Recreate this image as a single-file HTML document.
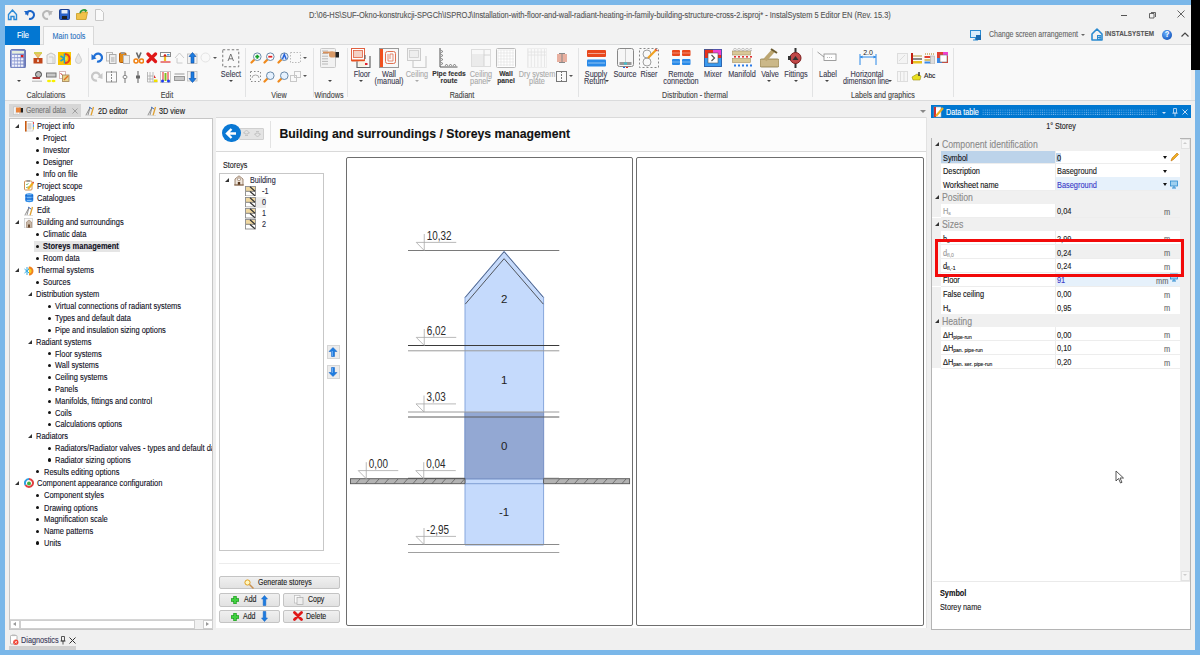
<!DOCTYPE html><html><head><meta charset="utf-8"><style>
*{margin:0;padding:0;box-sizing:border-box}
html,body{width:1200px;height:655px;overflow:hidden;background:#7ab7e9;font-family:"Liberation Sans",sans-serif}
.a{position:absolute}
.t{white-space:nowrap;-webkit-text-stroke:0.12px currentColor}

.sep{background:#e1e1e1}
sub{font-size:0.68em;vertical-align:-0.25em;line-height:0}
</style></head><body><div class="a" style="left:5px;top:5px;width:1190px;height:645px;background:#f0f0f0"></div>
<div class="a" style="left:1191px;top:0;width:9px;height:70px;background:#000"></div>
<div class="a " style="left:5px;top:5px;width:1186px;height:40px;background:#f2f2f2"></div>
<div class="a t" style="left:308.5px;top:9.00px;font-size:8.79px;line-height:12px;color:#555;font-weight:400;transform:scaleX(0.8475);transform-origin:0 50%;">D:\06-HS\SUF-Okno-konstrukcji-SPGCh\ISPROJ\Installation-with-floor-and-wall-radiant-heating-in-family-building-structure-cross-2.isproj* - InstalSystem 5 Editor EN (Rev. 15.3)</div>
<div class="a " style="left:1121px;top:14.5px;width:6px;height:1px;background:#555"></div>
<svg class="a" style="left:1149px;top:10.5px" width="8" height="8"><path d="M2 1.5H6.5V6M0.5 2.5H5V7H0.5Z" fill="none" stroke="#555" stroke-width="0.9"/></svg>
<svg class="a" style="left:1177px;top:10.3px" width="8" height="8"><path d="M0.5 0.5L7.5 7.5M7.5 0.5L0.5 7.5" stroke="#555" stroke-width="0.9"/></svg>
<div class="a " style="left:40px;top:44px;width:3px;height:1px;background:#dadbdc"></div>
<div class="a " style="left:93.5px;top:44px;width:1097.5px;height:1px;background:#dadbdc"></div>
<div class="a " style="left:5px;top:45px;width:1186px;height:55px;background:#f9f9f9"></div>
<div class="a " style="left:5px;top:26px;width:35px;height:18.5px;background:#0377d2"></div>
<div class="a t" style="left:-77.5px;width:200px;text-align:center;top:29.00px;font-size:8.85px;line-height:12px;color:#fff;font-weight:400;transform:scaleX(0.8475);transform-origin:50% 50%;">File</div>
<div class="a " style="left:43px;top:26.2px;width:50.5px;height:19px;background:#f9f9f9;border:1px solid #d8d8d8;border-bottom:none"></div>
<div class="a t" style="left:-31.5px;width:200px;text-align:center;top:29.50px;font-size:8.50px;line-height:12px;color:#2a73c0;font-weight:400;transform:scaleX(0.8475);transform-origin:50% 50%;">Main tools</div>
<div class="a t" style="left:989.4px;top:28.70px;font-size:8.26px;line-height:12px;color:#666;font-weight:400;transform:scaleX(0.8475);transform-origin:0 50%;">Change screen arrangement</div>
<div class="a" style="left:1081px;top:34px;width:0;height:0;border-left:2px solid transparent;border-right:2px solid transparent;border-top:2px solid #666"></div>
<div class="a t" style="left:1104.7px;top:27.80px;font-size:7.43px;line-height:12px;color:#555;font-weight:700;transform:scaleX(0.8475);transform-origin:0 50%;letter-spacing:0.1px">INSTALSYSTEM</div>
<div class="a" style="left:1162px;top:29.5px;width:10px;height:10px;border-radius:50%;background:radial-gradient(circle at 40% 35%,#6ab0ff,#1d5fc4 70%)"></div>
<div class="a t" style="left:1164.6px;top:28.70px;font-size:8.26px;line-height:12px;color:#fff;font-weight:700;transform:scaleX(0.8475);transform-origin:0 50%;">?</div>
<svg class="a" style="left:1181px;top:32px" width="8" height="5"><path d="M0.5 4.5L4 1L7.5 4.5" fill="none" stroke="#444" stroke-width="1.2"/></svg>
<div class="a " style="left:5px;top:100px;width:1190px;height:1px;background:#dadbdc"></div>
<div class="a " style="left:87.5px;top:48px;width:1px;height:49px;background:#e2e3e4"></div>
<div class="a " style="left:245.3px;top:48px;width:1px;height:49px;background:#e2e3e4"></div>
<div class="a " style="left:312.7px;top:48px;width:1px;height:49px;background:#e2e3e4"></div>
<div class="a " style="left:346.7px;top:48px;width:1px;height:49px;background:#e2e3e4"></div>
<div class="a " style="left:577.7px;top:48px;width:1px;height:49px;background:#e2e3e4"></div>
<div class="a " style="left:812.3px;top:48px;width:1px;height:49px;background:#e2e3e4"></div>
<div class="a " style="left:952.7px;top:48px;width:1px;height:49px;background:#e2e3e4"></div>
<div class="a t" style="left:-54.5px;width:200px;text-align:center;top:88.70px;font-size:8.44px;line-height:12px;color:#444;font-weight:400;transform:scaleX(0.8475);transform-origin:50% 50%;">Calculations</div>
<div class="a t" style="left:66.6px;width:200px;text-align:center;top:88.70px;font-size:8.44px;line-height:12px;color:#444;font-weight:400;transform:scaleX(0.8475);transform-origin:50% 50%;">Edit</div>
<div class="a t" style="left:178.7px;width:200px;text-align:center;top:88.70px;font-size:8.44px;line-height:12px;color:#444;font-weight:400;transform:scaleX(0.8475);transform-origin:50% 50%;">View</div>
<div class="a t" style="left:229.3px;width:200px;text-align:center;top:88.70px;font-size:8.44px;line-height:12px;color:#444;font-weight:400;transform:scaleX(0.8475);transform-origin:50% 50%;">Windows</div>
<div class="a t" style="left:362.3px;width:200px;text-align:center;top:88.70px;font-size:8.44px;line-height:12px;color:#444;font-weight:400;transform:scaleX(0.8475);transform-origin:50% 50%;">Radiant</div>
<div class="a t" style="left:595px;width:200px;text-align:center;top:88.70px;font-size:8.44px;line-height:12px;color:#444;font-weight:400;transform:scaleX(0.8475);transform-origin:50% 50%;">Distribution - thermal</div>
<div class="a t" style="left:782.7px;width:200px;text-align:center;top:88.70px;font-size:8.44px;line-height:12px;color:#444;font-weight:400;transform:scaleX(0.8475);transform-origin:50% 50%;">Labels and graphics</div>
<div class="a " style="left:9px;top:104.3px;width:72px;height:12.6px;background:#d6d6d6"></div>
<div class="a t" style="left:25.8px;top:104.50px;font-size:8.14px;line-height:12px;color:#777;font-weight:400;transform:scaleX(0.8475);transform-origin:0 50%;">General data</div>
<svg class="a" style="left:71.5px;top:108.3px" width="6" height="6"><path d="M0.5 0.5L5.5 5.5M5.5 0.5L0.5 5.5" stroke="#999" stroke-width="0.9"/></svg>
<div class="a t" style="left:97.8px;top:104.50px;font-size:8.61px;line-height:12px;color:#222;font-weight:400;transform:scaleX(0.8475);transform-origin:0 50%;">2D editor</div>
<div class="a t" style="left:159px;top:104.50px;font-size:8.61px;line-height:12px;color:#222;font-weight:400;transform:scaleX(0.8475);transform-origin:0 50%;">3D view</div>
<div class="a" style="left:920px;top:110px;width:0;height:0;border-left:3px solid transparent;border-right:3px solid transparent;border-top:3px solid #888"></div>
<div class="a " style="left:9px;top:117.5px;width:204px;height:512.5px;background:#fff;border:1px solid #c6c6c6"></div>
<div class="a " style="left:213px;top:117px;width:3px;height:513px;background:#eeeeee"></div>
<div class="a " style="left:10px;top:619px;width:202px;height:10px;background:#f0f0f0;border-top:1px solid #d6d6d6"></div>
<div class="a " style="left:10px;top:620px;width:10px;height:9px;background:#fff;border:1px solid #cfcfcf"></div>
<div class="a " style="left:20px;top:620px;width:175px;height:9px;background:#fff;border:1px solid #cfcfcf"></div>
<div class="a " style="left:202.5px;top:620px;width:10px;height:9px;background:#fff;border:1px solid #cfcfcf"></div>
<div class="a" style="left:13px;top:622px;width:0;height:0;border-top:2.5px solid transparent;border-bottom:2.5px solid transparent;border-right:3px solid #999"></div>
<div class="a" style="left:206px;top:622px;width:0;height:0;border-top:2.5px solid transparent;border-bottom:2.5px solid transparent;border-left:3px solid #999"></div>
<div class="a" style="left:10px;top:118px;width:202px;height:500px;overflow:hidden">
<div class="a" style="left:5.199999999999999px;top:6.00px;width:0;height:0;border-left:4px solid transparent;border-bottom:4px solid #333"></div>
<div class="a i_proj" style="left:3px;top:3.00px;width:9px;height:10px"></div>
<div class="a t" style="left:27.4px;top:2.00px;font-size:8.85px;line-height:12px;color:#10101e;font-weight:400;transform:scaleX(0.8475);transform-origin:0 50%;">Project info</div>
<div class="a " style="left:26.199999999999996px;top:19.000000000000007px;width:3.3px;height:3.3px;background:#111;border-radius:50%"></div>
<div class="a t" style="left:33.3px;top:14.40px;font-size:8.85px;line-height:12px;color:#10101e;font-weight:400;transform:scaleX(0.8475);transform-origin:0 50%;">Project</div>
<div class="a " style="left:26.199999999999996px;top:30.900000000000013px;width:3.3px;height:3.3px;background:#111;border-radius:50%"></div>
<div class="a t" style="left:33.3px;top:26.30px;font-size:8.85px;line-height:12px;color:#10101e;font-weight:400;transform:scaleX(0.8475);transform-origin:0 50%;">Investor</div>
<div class="a " style="left:26.199999999999996px;top:42.50000000000001px;width:3.3px;height:3.3px;background:#111;border-radius:50%"></div>
<div class="a t" style="left:33.3px;top:37.90px;font-size:8.85px;line-height:12px;color:#10101e;font-weight:400;transform:scaleX(0.8475);transform-origin:0 50%;">Designer</div>
<div class="a " style="left:26.199999999999996px;top:54.541666666666664px;width:3.3px;height:3.3px;background:#111;border-radius:50%"></div>
<div class="a t" style="left:33.3px;top:49.94px;font-size:8.85px;line-height:12px;color:#10101e;font-weight:400;transform:scaleX(0.8475);transform-origin:0 50%;">Info on file</div>
<div class="a i_scope" style="left:3px;top:62.98px;width:9px;height:10px"></div>
<div class="a t" style="left:27.4px;top:61.98px;font-size:8.85px;line-height:12px;color:#10101e;font-weight:400;transform:scaleX(0.8475);transform-origin:0 50%;">Project scope</div>
<div class="a i_cat" style="left:3px;top:75.03px;width:9px;height:10px"></div>
<div class="a t" style="left:27.4px;top:74.03px;font-size:8.85px;line-height:12px;color:#10101e;font-weight:400;transform:scaleX(0.8475);transform-origin:0 50%;">Catalogues</div>
<div class="a i_edit" style="left:3px;top:87.07px;width:9px;height:10px"></div>
<div class="a t" style="left:27.4px;top:86.07px;font-size:8.85px;line-height:12px;color:#10101e;font-weight:400;transform:scaleX(0.8475);transform-origin:0 50%;">Edit</div>
<div class="a" style="left:5.199999999999999px;top:102.11px;width:0;height:0;border-left:4px solid transparent;border-bottom:4px solid #333"></div>
<div class="a i_bld" style="left:3px;top:99.11px;width:9px;height:10px"></div>
<div class="a t" style="left:27.4px;top:98.11px;font-size:8.85px;line-height:12px;color:#10101e;font-weight:400;transform:scaleX(0.8475);transform-origin:0 50%;">Building and surroundings</div>
<div class="a " style="left:26.199999999999996px;top:114.74999999999997px;width:3.3px;height:3.3px;background:#111;border-radius:50%"></div>
<div class="a t" style="left:33.3px;top:110.15px;font-size:8.85px;line-height:12px;color:#10101e;font-weight:400;transform:scaleX(0.8475);transform-origin:0 50%;">Climatic data</div>
<div class="a " style="left:23.700000000000003px;top:122.69166666666666px;width:86px;height:11px;background:#e5e5e5"></div>
<div class="a " style="left:26.199999999999996px;top:126.79166666666666px;width:3.3px;height:3.3px;background:#111;border-radius:50%"></div>
<div class="a t" style="left:33.3px;top:122.19px;font-size:8.85px;line-height:12px;color:#10101e;font-weight:400;transform:scaleX(0.8475);transform-origin:0 50%;"><b>Storeys management</b></div>
<div class="a " style="left:26.199999999999996px;top:138.83333333333334px;width:3.3px;height:3.3px;background:#111;border-radius:50%"></div>
<div class="a t" style="left:33.3px;top:134.23px;font-size:8.85px;line-height:12px;color:#10101e;font-weight:400;transform:scaleX(0.8475);transform-origin:0 50%;">Room data</div>
<div class="a" style="left:5.199999999999999px;top:150.27px;width:0;height:0;border-left:4px solid transparent;border-bottom:4px solid #333"></div>
<div class="a i_therm" style="left:3px;top:147.27px;width:9px;height:10px"></div>
<div class="a t" style="left:27.4px;top:146.27px;font-size:8.85px;line-height:12px;color:#10101e;font-weight:400;transform:scaleX(0.8475);transform-origin:0 50%;">Thermal systems</div>
<div class="a " style="left:26.199999999999996px;top:162.91666666666666px;width:3.3px;height:3.3px;background:#111;border-radius:50%"></div>
<div class="a t" style="left:33.3px;top:158.32px;font-size:8.85px;line-height:12px;color:#10101e;font-weight:400;transform:scaleX(0.8475);transform-origin:0 50%;">Sources</div>
<div class="a" style="left:17.5px;top:174.36px;width:0;height:0;border-left:4px solid transparent;border-bottom:4px solid #333"></div>
<div class="a t" style="left:25.6px;top:170.36px;font-size:8.85px;line-height:12px;color:#10101e;font-weight:400;transform:scaleX(0.8475);transform-origin:0 50%;">Distribution system</div>
<div class="a " style="left:38.199999999999996px;top:186.99999999999997px;width:3.3px;height:3.3px;background:#111;border-radius:50%"></div>
<div class="a t" style="left:45px;top:182.40px;font-size:8.85px;line-height:12px;color:#10101e;font-weight:400;transform:scaleX(0.8475);transform-origin:0 50%;">Virtual connections of radiant systems</div>
<div class="a " style="left:38.199999999999996px;top:198.99999999999997px;width:3.3px;height:3.3px;background:#111;border-radius:50%"></div>
<div class="a t" style="left:45px;top:194.40px;font-size:8.85px;line-height:12px;color:#10101e;font-weight:400;transform:scaleX(0.8475);transform-origin:0 50%;">Types and default data</div>
<div class="a " style="left:38.199999999999996px;top:210.9px;width:3.3px;height:3.3px;background:#111;border-radius:50%"></div>
<div class="a t" style="left:45px;top:206.30px;font-size:8.85px;line-height:12px;color:#10101e;font-weight:400;transform:scaleX(0.8475);transform-origin:0 50%;">Pipe and insulation sizing options</div>
<div class="a" style="left:17.5px;top:221.70px;width:0;height:0;border-left:4px solid transparent;border-bottom:4px solid #333"></div>
<div class="a t" style="left:25.6px;top:217.70px;font-size:8.85px;line-height:12px;color:#10101e;font-weight:400;transform:scaleX(0.8475);transform-origin:0 50%;">Radiant systems</div>
<div class="a " style="left:38.199999999999996px;top:234.17499999999998px;width:3.3px;height:3.3px;background:#111;border-radius:50%"></div>
<div class="a t" style="left:45px;top:229.57px;font-size:8.85px;line-height:12px;color:#10101e;font-weight:400;transform:scaleX(0.8475);transform-origin:0 50%;">Floor systems</div>
<div class="a " style="left:38.199999999999996px;top:246.04999999999998px;width:3.3px;height:3.3px;background:#111;border-radius:50%"></div>
<div class="a t" style="left:45px;top:241.45px;font-size:8.85px;line-height:12px;color:#10101e;font-weight:400;transform:scaleX(0.8475);transform-origin:0 50%;">Wall systems</div>
<div class="a " style="left:38.199999999999996px;top:257.925px;width:3.3px;height:3.3px;background:#111;border-radius:50%"></div>
<div class="a t" style="left:45px;top:253.32px;font-size:8.85px;line-height:12px;color:#10101e;font-weight:400;transform:scaleX(0.8475);transform-origin:0 50%;">Ceiling systems</div>
<div class="a " style="left:38.199999999999996px;top:269.8px;width:3.3px;height:3.3px;background:#111;border-radius:50%"></div>
<div class="a t" style="left:45px;top:265.20px;font-size:8.85px;line-height:12px;color:#10101e;font-weight:400;transform:scaleX(0.8475);transform-origin:0 50%;">Panels</div>
<div class="a " style="left:38.199999999999996px;top:281.5px;width:3.3px;height:3.3px;background:#111;border-radius:50%"></div>
<div class="a t" style="left:45px;top:276.90px;font-size:8.85px;line-height:12px;color:#10101e;font-weight:400;transform:scaleX(0.8475);transform-origin:0 50%;">Manifolds, fittings and control</div>
<div class="a " style="left:38.199999999999996px;top:293.1px;width:3.3px;height:3.3px;background:#111;border-radius:50%"></div>
<div class="a t" style="left:45px;top:288.50px;font-size:8.85px;line-height:12px;color:#10101e;font-weight:400;transform:scaleX(0.8475);transform-origin:0 50%;">Coils</div>
<div class="a " style="left:38.199999999999996px;top:305.0px;width:3.3px;height:3.3px;background:#111;border-radius:50%"></div>
<div class="a t" style="left:45px;top:300.40px;font-size:8.85px;line-height:12px;color:#10101e;font-weight:400;transform:scaleX(0.8475);transform-origin:0 50%;">Calculations options</div>
<div class="a" style="left:17.5px;top:315.60px;width:0;height:0;border-left:4px solid transparent;border-bottom:4px solid #333"></div>
<div class="a t" style="left:25.6px;top:311.60px;font-size:8.85px;line-height:12px;color:#10101e;font-weight:400;transform:scaleX(0.8475);transform-origin:0 50%;">Radiators</div>
<div class="a " style="left:38.199999999999996px;top:328.70000000000005px;width:3.3px;height:3.3px;background:#111;border-radius:50%"></div>
<div class="a t" style="left:45px;top:324.10px;font-size:8.85px;line-height:12px;color:#10101e;font-weight:400;transform:scaleX(0.8475);transform-origin:0 50%;">Radiators/Radiator valves - types and default data</div>
<div class="a " style="left:38.199999999999996px;top:340.3px;width:3.3px;height:3.3px;background:#111;border-radius:50%"></div>
<div class="a t" style="left:45px;top:335.70px;font-size:8.85px;line-height:12px;color:#10101e;font-weight:400;transform:scaleX(0.8475);transform-origin:0 50%;">Radiator sizing options</div>
<div class="a " style="left:25.9px;top:352.20000000000005px;width:3.3px;height:3.3px;background:#111;border-radius:50%"></div>
<div class="a t" style="left:33.7px;top:347.60px;font-size:8.85px;line-height:12px;color:#10101e;font-weight:400;transform:scaleX(0.8475);transform-origin:0 50%;">Results editing options</div>
<div class="a" style="left:5.199999999999999px;top:363.00px;width:0;height:0;border-left:4px solid transparent;border-bottom:4px solid #333"></div>
<div class="a i_comp" style="left:2px;top:360.00px;width:9px;height:10px"></div>
<div class="a t" style="left:27.200000000000003px;top:359.00px;font-size:8.85px;line-height:12px;color:#10101e;font-weight:400;transform:scaleX(0.8475);transform-origin:0 50%;">Component appearance configuration</div>
<div class="a " style="left:25.9px;top:376.0px;width:3.3px;height:3.3px;background:#111;border-radius:50%"></div>
<div class="a t" style="left:33.7px;top:371.40px;font-size:8.85px;line-height:12px;color:#10101e;font-weight:400;transform:scaleX(0.8475);transform-origin:0 50%;">Component styles</div>
<div class="a " style="left:25.9px;top:388.20000000000005px;width:3.3px;height:3.3px;background:#111;border-radius:50%"></div>
<div class="a t" style="left:33.7px;top:383.60px;font-size:8.85px;line-height:12px;color:#10101e;font-weight:400;transform:scaleX(0.8475);transform-origin:0 50%;">Drawing options</div>
<div class="a " style="left:25.9px;top:399.9px;width:3.3px;height:3.3px;background:#111;border-radius:50%"></div>
<div class="a t" style="left:33.7px;top:395.30px;font-size:8.85px;line-height:12px;color:#10101e;font-weight:400;transform:scaleX(0.8475);transform-origin:0 50%;">Magnification scale</div>
<div class="a " style="left:25.9px;top:411.80000000000007px;width:3.3px;height:3.3px;background:#111;border-radius:50%"></div>
<div class="a t" style="left:33.7px;top:407.20px;font-size:8.85px;line-height:12px;color:#10101e;font-weight:400;transform:scaleX(0.8475);transform-origin:0 50%;">Name patterns</div>
<div class="a " style="left:25.9px;top:423.4px;width:3.3px;height:3.3px;background:#111;border-radius:50%"></div>
<div class="a t" style="left:33.7px;top:418.80px;font-size:8.85px;line-height:12px;color:#10101e;font-weight:400;transform:scaleX(0.8475);transform-origin:0 50%;">Units</div>
</div>
<div class="a " style="left:216px;top:118px;width:711px;height:510px;background:#fff"></div>
<div class="a " style="left:216px;top:118px;width:711px;height:33px;background:#fcfcfc"></div>
<div class="a " style="left:216px;top:151px;width:711px;height:1px;background:#d9d9d9"></div>
<div class="a " style="left:216px;top:117.3px;width:711px;height:1px;background:#dadada"></div>
<div class="a " style="left:926.3px;top:117.3px;width:1px;height:511px;background:#e2e2e2"></div>
<div class="a " style="left:270px;top:121px;width:1px;height:27px;background:#e3e3e3"></div>
<div class="a t" style="left:279.5px;top:128.00px;font-size:12.25px;line-height:12px;color:#111;font-weight:700;transform:scaleX(1.0000);transform-origin:0 50%;">Building and surroundings / Storeys management</div>
<div class="a " style="left:239px;top:127.5px;width:24.5px;height:12px;background:#e4e4e4;border:1px solid #d0d0d0;border-radius:1px"></div>
<svg class="a" style="left:242.5px;top:129px" width="20" height="9"><path d="M3.5 1L6.5 4H5V5H2V4H0.5ZM2 6.5H5" fill="none" stroke="#b8b8b8" stroke-width="0.7"/><path d="M14.5 8L17.5 5H16V4H13V5H11.5ZM13 2.5H16" fill="none" stroke="#b8b8b8" stroke-width="0.7"/></svg>
<div class="a" style="left:222.3px;top:124px;width:18.4px;height:18.4px;border-radius:50%;background:#0a78d4"></div>
<svg class="a" style="left:224px;top:126px" width="15" height="15"><path d="M3 7.5h9M7.5 3L3 7.5L7.5 12" fill="none" stroke="#fff" stroke-width="2.4"/></svg>
<div class="a t" style="left:222.7px;top:159.30px;font-size:8.50px;line-height:12px;color:#222;font-weight:400;transform:scaleX(0.8475);transform-origin:0 50%;">Storeys</div>
<div class="a " style="left:219.3px;top:173.3px;width:104.5px;height:377.5px;background:#fff;border:1px solid #c7c7c7"></div>
<div class="a " style="left:219px;top:563px;width:121px;height:1px;background:#ececec"></div>
<div class="a " style="left:219.3px;top:576.4px;width:120.7px;height:13.1px;background:linear-gradient(#f0f0f0,#e2e2e2);border:1px solid #c4c4c4;border-radius:2px"></div>
<div class="a t" style="left:257.8px;top:576.95px;font-size:8.26px;line-height:12px;color:#222;font-weight:400;transform:scaleX(0.8475);transform-origin:0 50%;">Generate storeys</div>
<div class="a " style="left:219.3px;top:593.3px;width:60.5px;height:13.3px;background:linear-gradient(#f0f0f0,#e2e2e2);border:1px solid #c4c4c4;border-radius:2px"></div>
<div class="a t" style="left:243.5px;top:593.95px;font-size:8.26px;line-height:12px;color:#222;font-weight:400;transform:scaleX(0.8475);transform-origin:0 50%;">Add</div>
<div class="a " style="left:282.5px;top:593.3px;width:57.5px;height:13.3px;background:linear-gradient(#f0f0f0,#e2e2e2);border:1px solid #c4c4c4;border-radius:2px"></div>
<div class="a t" style="left:307.6px;top:593.95px;font-size:8.26px;line-height:12px;color:#222;font-weight:400;transform:scaleX(0.8475);transform-origin:0 50%;">Copy</div>
<div class="a " style="left:219.3px;top:610px;width:60.5px;height:13.1px;background:linear-gradient(#f0f0f0,#e2e2e2);border:1px solid #c4c4c4;border-radius:2px"></div>
<div class="a t" style="left:243px;top:610.55px;font-size:8.26px;line-height:12px;color:#222;font-weight:400;transform:scaleX(0.8475);transform-origin:0 50%;">Add</div>
<div class="a " style="left:282.5px;top:610px;width:57.5px;height:13.1px;background:linear-gradient(#f0f0f0,#e2e2e2);border:1px solid #c4c4c4;border-radius:2px"></div>
<div class="a t" style="left:305.5px;top:610.55px;font-size:8.26px;line-height:12px;color:#222;font-weight:400;transform:scaleX(0.8475);transform-origin:0 50%;">Delete</div>
<div class="a " style="left:346.2px;top:157.4px;width:287.2px;height:469px;border:1px solid #6e6e6e;border-radius:2px"></div>
<div class="a " style="left:636.3px;top:157.4px;width:287.6px;height:469px;border:1px solid #6e6e6e;border-radius:2px"></div>
<div class="a " style="left:931.4px;top:105px;width:259.6px;height:13.3px;background:#0077d0"></div>
<div class="a t" style="left:945.9px;top:105.50px;font-size:8.50px;line-height:12px;color:#fff;font-weight:400;transform:scaleX(0.8475);transform-origin:0 50%;">Data table</div>
<div class="a " style="left:931.4px;top:118px;width:259.6px;height:512px;background:#f0f0f0"></div>
<div class="a t" style="left:961px;width:200px;text-align:center;top:119.50px;font-size:8.50px;line-height:12px;color:#222;font-weight:400;transform:scaleX(0.8475);transform-origin:50% 50%;">1° Storey</div>
<div class="a " style="left:931.2px;top:137.5px;width:259.8px;height:492px;background:#fff;border:1px solid #b4b4b4"></div>
<div class="a " style="left:932.2px;top:138.5px;width:247.8px;height:442px;background:#fff"></div>
<div class="a " style="left:1180px;top:138.5px;width:10px;height:442px;background:#f0f0f0"></div>
<div class="a " style="left:932.5px;top:580.5px;width:257.5px;height:1px;background:#eaeaea"></div>
<div class="a t" style="left:939.5px;top:587.00px;font-size:8.61px;line-height:12px;color:#111;font-weight:700;transform:scaleX(0.8475);transform-origin:0 50%;">Symbol</div>
<div class="a t" style="left:939.5px;top:600.70px;font-size:8.61px;line-height:12px;color:#222;font-weight:400;transform:scaleX(0.8475);transform-origin:0 50%;">Storey name</div>
<div class="a t" style="left:21px;top:633.90px;font-size:8.61px;line-height:12px;color:#3a3a5a;font-weight:400;transform:scaleX(0.8475);transform-origin:0 50%;">Diagnostics</div>
<div class="a " style="left:9px;top:646px;width:67px;height:4px;background:#d0d0d0"></div>
<svg class="a" style="left:12.6px;top:105.5px" width="10" height="9" viewBox="0 0 10 9"><rect x="0.5" y="1" width="6" height="7.5" fill="#fff" stroke="#bbb" stroke-width="0.6"/><path d="M1.5 3H5M1.5 5H5M1.5 7H5" stroke="#aaa" stroke-width="0.5"/><path d="M3 1.5H8V6.5H3Z" fill="#e8843c"/><rect x="7.8" y="2" width="2.2" height="4.5" fill="#222"/></svg>
<svg class="a" style="left:85px;top:105.5px" width="10" height="10" viewBox="0 0 10 10"><path d="M1 9L5 1.5M5 1.5L3 9" stroke="#777" stroke-width="0.8" fill="none"/><path d="M4 1L7 3" stroke="#3a6ac0" stroke-width="1"/><path d="M6 9.5L8.5 1" stroke="#e0a030" stroke-width="1.3"/><path d="M0 9.5H9" stroke="#ccc" stroke-width="0.6"/></svg>
<svg class="a" style="left:146.7px;top:105.5px" width="10" height="10" viewBox="0 0 10 10"><path d="M1 9L5 1.5M5 1.5L3 9" stroke="#777" stroke-width="0.8" fill="none"/><path d="M4 1L7 3" stroke="#3a6ac0" stroke-width="1"/><path d="M6 9.5L8.5 1" stroke="#e0a030" stroke-width="1.3"/><path d="M0 9.5H9" stroke="#ccc" stroke-width="0.6"/></svg>
<svg class="a" style="left:25px;top:121px" width="9" height="10.5" viewBox="0 0 9 10.5"><rect x="0.5" y="0.5" width="7.5" height="9.5" fill="#fff" stroke="#bbb" stroke-width="0.6"/><rect x="0" y="0" width="1.6" height="10.5" fill="#c85a10"/><rect x="2.5" y="2" width="4" height="6.5" fill="#d6d6d6"/><rect x="8" y="1" width="1" height="2.5" fill="#f05050"/><rect x="8" y="3.5" width="1" height="2.5" fill="#50a0f0"/><rect x="8" y="6" width="1" height="2.5" fill="#e0c040"/></svg>
<svg class="a" style="left:24px;top:180.4px" width="10" height="10.5" viewBox="0 0 10 10.5"><rect x="0.5" y="1" width="7.5" height="9" rx="1" fill="#fff" stroke="#d09050" stroke-width="1"/><rect x="2.5" y="0" width="3.5" height="1.8" fill="#999"/><path d="M2 4L3 5L4.5 3M2 7L3 8L4.5 6" stroke="#40a040" stroke-width="0.6" fill="none"/><path d="M4 9L9 3" stroke="#f0b020" stroke-width="2"/><circle cx="9.2" cy="2.6" r="0.9" fill="#e05040"/></svg>
<svg class="a" style="left:25px;top:193.3px" width="8.5" height="10" viewBox="0 0 8.5 10"><ellipse cx="4.25" cy="1.8" rx="4" ry="1.6" fill="#2a8ae8"/><rect x="0.25" y="2" width="8" height="2.4" fill="#1a6ad0"/><ellipse cx="4.25" cy="4.6" rx="4" ry="1.4" fill="#3a9af0"/><rect x="0.25" y="4.8" width="8" height="2.4" fill="#1a6ad0"/><ellipse cx="4.25" cy="7.6" rx="4" ry="1.6" fill="#2a8ae8"/><path d="M2 1.8H6.5M2 4.8H6.5M2 7.6H6.5" stroke="#cfe6ff" stroke-width="0.6"/></svg>
<svg class="a" style="left:24px;top:205.5px" width="10" height="10" viewBox="0 0 10 10"><path d="M1 9L5 1.5M5 1.5L3 9" stroke="#777" stroke-width="0.8" fill="none"/><path d="M4 1L7 3" stroke="#3a6ac0" stroke-width="1"/><path d="M6 9.5L8.5 1" stroke="#e0a030" stroke-width="1.3"/><path d="M0 9.5H9" stroke="#ccc" stroke-width="0.6"/></svg>
<svg class="a" style="left:24px;top:217.5px" width="10" height="10.5" viewBox="0 0 10 10.5"><rect x="0.5" y="0.5" width="8" height="9.5" fill="#fafafa" stroke="#c8c8c8" stroke-width="0.7"/><path d="M2.5 4L5 2L7.5 4V9.5H2.5Z" fill="#c8b8a8" stroke="#8a6a50" stroke-width="0.5"/><rect x="4" y="6.5" width="2" height="3" fill="#6a4a30"/></svg>
<svg class="a" style="left:24.4px;top:265.5px" width="9.5" height="10" viewBox="0 0 9.5 10"><path d="M5 5A4.5 4.5 0 0 1 5 0.5A4.5 4.5 0 0 1 5 9.5Z" fill="#f08020"/><path d="M5 2.5A2.5 2.5 0 0 1 5 7.5" fill="#f8d020"/><path d="M3 1V9M0.5 3L5 7M0.5 7L5 3" stroke="#30a8e0" stroke-width="1"/></svg>
<svg class="a" style="left:23.8px;top:478px" width="10" height="10.5" viewBox="0 0 10 10.5"><path d="M5 1A4 4 0 1 1 1.5 7" fill="none" stroke="#e04040" stroke-width="2"/><path d="M1.5 7A4 4 0 0 1 5 1" fill="none" stroke="#30a0e0" stroke-width="2"/><circle cx="5" cy="5.5" r="2" fill="#40b040"/></svg>
<div class="a" style="left:225.3px;top:178px;width:0;height:0;border-left:4px solid transparent;border-bottom:4px solid #333"></div>
<svg class="a" style="left:234px;top:175px" width="10" height="10.5" viewBox="0 0 10 10.5"><path d="M1 4L5 0.8L9 4V10H1Z" fill="#efe6dc" stroke="#7a5a40" stroke-width="0.7"/><circle cx="5" cy="4.3" r="1.5" fill="#fff" stroke="#7a5a40" stroke-width="0.6"/><rect x="3.8" y="7" width="2.4" height="3" fill="#5a3a20"/><path d="M0 10H10" stroke="#8a6a50"/></svg>
<div class="a t" style="left:250.3px;top:173.70px;font-size:8.50px;line-height:12px;color:#2a2a40;font-weight:400;transform:scaleX(0.8475);transform-origin:0 50%;">Building</div>
<div class="a " style="left:245px;top:196.5px;width:21px;height:11px;background:#ececec"></div>
<svg class="a" style="left:245px;top:185.6px" width="11" height="10.5" viewBox="0 0 11 10.5"><rect x="0.5" y="0.5" width="10" height="9.5" fill="#fff" stroke="#8a8a8a" stroke-width="0.9"/><rect x="1" y="1" width="9" height="4.3" fill="#f0d8a0"/><path d="M1 5.3H10" stroke="#777" stroke-width="0.9"/><path d="M5 0.8L10 5.2M5 5.5L10 9.8" stroke="#333" stroke-width="1.2"/></svg>
<div class="a t" style="left:262px;top:184.60px;font-size:8.50px;line-height:12px;color:#2a2a40;font-weight:400;transform:scaleX(0.8475);transform-origin:0 50%;">-1</div>
<svg class="a" style="left:245px;top:196.79999999999998px" width="11" height="10.5" viewBox="0 0 11 10.5"><rect x="0.5" y="0.5" width="10" height="9.5" fill="#fff" stroke="#8a8a8a" stroke-width="0.9"/><rect x="1" y="1" width="9" height="4.3" fill="#f0d8a0"/><path d="M1 5.3H10" stroke="#777" stroke-width="0.9"/><path d="M5 0.8L10 5.2M5 5.5L10 9.8" stroke="#333" stroke-width="1.2"/></svg>
<div class="a t" style="left:262px;top:195.80px;font-size:8.50px;line-height:12px;color:#2a2a40;font-weight:400;transform:scaleX(0.8475);transform-origin:0 50%;">0</div>
<svg class="a" style="left:245px;top:208.0px" width="11" height="10.5" viewBox="0 0 11 10.5"><rect x="0.5" y="0.5" width="10" height="9.5" fill="#fff" stroke="#8a8a8a" stroke-width="0.9"/><rect x="1" y="1" width="9" height="4.3" fill="#f0d8a0"/><path d="M1 5.3H10" stroke="#777" stroke-width="0.9"/><path d="M5 0.8L10 5.2M5 5.5L10 9.8" stroke="#333" stroke-width="1.2"/></svg>
<div class="a t" style="left:262px;top:207.00px;font-size:8.50px;line-height:12px;color:#2a2a40;font-weight:400;transform:scaleX(0.8475);transform-origin:0 50%;">1</div>
<svg class="a" style="left:245px;top:219.2px" width="11" height="10.5" viewBox="0 0 11 10.5"><rect x="0.5" y="0.5" width="10" height="9.5" fill="#fff" stroke="#8a8a8a" stroke-width="0.9"/><rect x="1" y="1" width="9" height="4.3" fill="#f0d8a0"/><path d="M1 5.3H10" stroke="#777" stroke-width="0.9"/><path d="M5 0.8L10 5.2M5 5.5L10 9.8" stroke="#333" stroke-width="1.2"/></svg>
<div class="a t" style="left:262px;top:218.20px;font-size:8.50px;line-height:12px;color:#2a2a40;font-weight:400;transform:scaleX(0.8475);transform-origin:0 50%;">2</div>
<div class="a " style="left:326.8px;top:345.3px;width:13px;height:13.3px;background:#ececec;border:1px solid #d6d6d6"></div>
<svg class="a" style="left:328.3px;top:346.8px" width="10" height="10" viewBox="0 0 10 10"><path d="M5 0.5L9 4.5H6.5V9.5H3.5V4.5H1Z" fill="#1c7ce0" stroke="#0a5ac0" stroke-width="0.5"/><path d="M4.3 4V9" stroke="#8cc4ff" stroke-width="0.8"/></svg>
<div class="a " style="left:326.8px;top:365.4px;width:13px;height:13.3px;background:#ececec;border:1px solid #d6d6d6"></div>
<svg class="a" style="left:328.3px;top:367.2px" width="10" height="10" viewBox="0 0 10 10"><path d="M5 9.5L9 5.5H6.5V0.5H3.5V5.5H1Z" fill="#1c7ce0" stroke="#0a5ac0" stroke-width="0.5"/><path d="M4.3 1V6" stroke="#8cc4ff" stroke-width="0.8"/></svg>
<svg class="a" style="left:244px;top:578.5px" width="10" height="10" viewBox="0 0 10 10"><circle cx="3.5" cy="3.5" r="2.6" fill="#fff6c0" stroke="#e0a020" stroke-width="1"/><path d="M5.5 5.5L9.5 9.5" stroke="#c89050" stroke-width="1.5"/></svg>
<svg class="a" style="left:229.5px;top:595px" width="10" height="10" viewBox="0 0 10 10"><path d="M5 1V9M1 5H9" stroke="#1a9a1a" stroke-width="3.4"/><path d="M5 1.5V8.5M1.5 5H8.5" stroke="#40d040" stroke-width="2"/></svg>
<svg class="a" style="left:229.5px;top:611.7px" width="10" height="10" viewBox="0 0 10 10"><path d="M5 1V9M1 5H9" stroke="#1a9a1a" stroke-width="3.4"/><path d="M5 1.5V8.5M1.5 5H8.5" stroke="#40d040" stroke-width="2"/></svg>
<svg class="a" style="left:261px;top:594.5px" width="7" height="11" viewBox="0 0 7 11"><path d="M3.5 0.5L6.5 4H4.8V10.5H2.2V4H0.5Z" fill="#1c7ce0" stroke="#0a5ac0" stroke-width="0.5"/></svg>
<svg class="a" style="left:261px;top:611.2px" width="7" height="11" viewBox="0 0 7 11"><path d="M3.5 10.5L6.5 7H4.8V0.5H2.2V7H0.5Z" fill="#1c7ce0" stroke="#0a5ac0" stroke-width="0.5"/></svg>
<svg class="a" style="left:294px;top:595px" width="10" height="10" viewBox="0 0 10 10"><rect x="0.5" y="0.5" width="5.5" height="7.5" fill="#fafafa" stroke="#bbb" stroke-width="0.7"/><rect x="3" y="2.5" width="6" height="7" fill="#eee" stroke="#aaa" stroke-width="0.7"/></svg>
<svg class="a" style="left:292.5px;top:611px" width="10" height="10" viewBox="0 0 10 10"><path d="M1.5 1.5L8.5 8.5M8.5 1.5L1.5 8.5" stroke="#e01818" stroke-width="2.8" stroke-linecap="round"/></svg>
<svg class="a" style="left:10px;top:633.8px" width="9" height="11" viewBox="0 0 9 11"><rect x="0.5" y="1.5" width="6.5" height="8.5" rx="0.8" fill="#fff" stroke="#999" stroke-width="0.7"/><rect x="2" y="0.5" width="3.5" height="1.6" fill="#bbb"/><circle cx="5.8" cy="8.2" r="2.6" fill="#f04030"/><path d="M4.6 7L7 9.4M7 7L4.6 9.4" stroke="#fff" stroke-width="0.7"/></svg>
<svg class="a" style="left:59.5px;top:635.5px" width="6" height="9" viewBox="0 0 6 9"><path d="M1.5 0.5H4.5V5H1.5ZM0.5 5H5.5M3 5V8.5" fill="none" stroke="#444" stroke-width="0.9"/></svg>
<svg class="a" style="left:68.5px;top:637px" width="7" height="7" viewBox="0 0 7 7"><path d="M0.5 0.5L6.5 6.5M6.5 0.5L0.5 6.5" stroke="#333" stroke-width="1"/></svg>
<svg class="a" style="left:970px;top:29.5px" width="11.5" height="11" viewBox="0 0 11.5 11"><rect x="0.5" y="0.5" width="10" height="7" fill="#d8ecfb" stroke="#2a8ad0" stroke-width="1"/><path d="M3 10H8M5.5 7.5V10" stroke="#2a8ad0" stroke-width="1.2"/><rect x="6" y="5" width="5" height="5" fill="#1a6ab0"/></svg>
<svg class="a" style="left:1090.5px;top:28px" width="12" height="13" viewBox="0 0 12 13"><path d="M6 1L1 6V12H11V6Z" fill="none" stroke="#2a8ad0" stroke-width="1.6" stroke-linejoin="round"/><rect x="6" y="7" width="4" height="5" fill="#2a8ad0"/><rect x="7" y="8" width="0.8" height="0.8" fill="#fff"/><rect x="8.5" y="8" width="0.8" height="0.8" fill="#fff"/><rect x="7" y="10" width="0.8" height="0.8" fill="#fff"/><rect x="8.5" y="10" width="0.8" height="0.8" fill="#fff"/></svg>
<div class="a " style="left:932.2px;top:137.7px;width:247.8px;height:13.100000000000023px;background:#f0f0f0"></div>
<div class="a" style="left:934.5px;top:142.20px;width:0;height:0;border-left:4px solid transparent;border-bottom:4px solid #333"></div>
<div class="a t" style="left:942.3px;top:139.15px;font-size:10.27px;line-height:12px;color:#8a8a8a;font-weight:400;transform:scaleX(0.8475);transform-origin:0 50%;">Component identification</div>
<div class="a " style="left:932.2px;top:150.8px;width:8.8px;height:13.199999999999989px;background:#f0f0f0"></div>
<div class="a " style="left:941px;top:150.8px;width:114px;height:12.599999999999989px;background:#bcd3ea"></div>
<div class="a " style="left:1055px;top:150.8px;width:124.5px;height:12.599999999999989px;background:#fff;border-left:1px solid #ececec"></div>
<div class="a " style="left:941px;top:163.4px;width:238.5px;height:0.6px;background:#ededed"></div>
<div class="a t" style="left:942.5px;top:152.10px;font-size:8.73px;line-height:12px;color:#111;font-weight:400;transform:scaleX(0.8475);transform-origin:0 50%;">Symbol</div>
<div class="a " style="left:1056px;top:153.3px;width:4.5px;height:9px;background:#bcd3ea"></div>
<div class="a t" style="left:1057px;top:152.10px;font-size:8.73px;line-height:12px;color:#111;font-weight:400;transform:scaleX(0.8475);transform-origin:0 50%;">0</div>
<div class="a " style="left:932.2px;top:164.0px;width:8.8px;height:13.300000000000011px;background:#f0f0f0"></div>
<div class="a " style="left:941px;top:164.0px;width:114px;height:12.700000000000012px;background:#fff"></div>
<div class="a " style="left:1055px;top:164.0px;width:124.5px;height:12.700000000000012px;background:#fff;border-left:1px solid #ececec"></div>
<div class="a " style="left:941px;top:176.70000000000002px;width:238.5px;height:0.6px;background:#ededed"></div>
<div class="a t" style="left:942.5px;top:165.35px;font-size:8.73px;line-height:12px;color:#111;font-weight:400;transform:scaleX(0.8475);transform-origin:0 50%;">Description</div>
<div class="a t" style="left:1057px;top:165.35px;font-size:8.73px;line-height:12px;color:#222;font-weight:400;transform:scaleX(0.8475);transform-origin:0 50%;">Baseground</div>
<div class="a " style="left:932.2px;top:177.3px;width:8.8px;height:13.399999999999977px;background:#f0f0f0"></div>
<div class="a " style="left:941px;top:177.3px;width:114px;height:12.799999999999978px;background:#fff"></div>
<div class="a " style="left:1055px;top:177.3px;width:124.5px;height:12.799999999999978px;background:#e6f1fb;border-left:1px solid #ececec"></div>
<div class="a " style="left:941px;top:190.1px;width:238.5px;height:0.6px;background:#ededed"></div>
<div class="a t" style="left:942.5px;top:178.70px;font-size:8.73px;line-height:12px;color:#111;font-weight:400;transform:scaleX(0.8475);transform-origin:0 50%;">Worksheet name</div>
<div class="a t" style="left:1057px;top:178.70px;font-size:8.73px;line-height:12px;color:#3b3bc8;font-weight:400;transform:scaleX(0.8475);transform-origin:0 50%;">Baseground</div>
<div class="a " style="left:932.2px;top:190.7px;width:247.8px;height:13.100000000000023px;background:#f0f0f0"></div>
<div class="a" style="left:934.5px;top:195.20px;width:0;height:0;border-left:4px solid transparent;border-bottom:4px solid #333"></div>
<div class="a t" style="left:942.3px;top:192.15px;font-size:10.27px;line-height:12px;color:#8a8a8a;font-weight:400;transform:scaleX(0.8475);transform-origin:0 50%;">Position</div>
<div class="a " style="left:932.2px;top:203.8px;width:8.8px;height:13.699999999999989px;background:#f0f0f0"></div>
<div class="a " style="left:941px;top:203.8px;width:114px;height:13.099999999999989px;background:#fff"></div>
<div class="a " style="left:1055px;top:203.8px;width:124.5px;height:13.099999999999989px;background:#f0f0f0;border-left:1px solid #ececec"></div>
<div class="a " style="left:941px;top:216.9px;width:238.5px;height:0.6px;background:#ededed"></div>
<div class="a t" style="left:942.5px;top:205.35px;font-size:8.73px;line-height:12px;color:#999;font-weight:400;transform:scaleX(0.8475);transform-origin:0 50%;">H<sub>s</sub></div>
<div class="a t" style="left:1057px;top:205.35px;font-size:8.73px;line-height:12px;color:#222;font-weight:400;transform:scaleX(0.8475);transform-origin:0 50%;">0,04</div>
<div class="a t" style="left:1163.5px;top:205.75px;font-size:8.73px;line-height:12px;color:#666;font-weight:400;transform:scaleX(0.8475);transform-origin:0 50%;">m</div>
<div class="a " style="left:932.2px;top:217.5px;width:247.8px;height:13.400000000000006px;background:#f0f0f0"></div>
<div class="a" style="left:934.5px;top:222.00px;width:0;height:0;border-left:4px solid transparent;border-bottom:4px solid #333"></div>
<div class="a t" style="left:942.3px;top:219.10px;font-size:10.27px;line-height:12px;color:#8a8a8a;font-weight:400;transform:scaleX(0.8475);transform-origin:0 50%;">Sizes</div>
<div class="a " style="left:932.2px;top:230.9px;width:8.8px;height:13.900000000000006px;background:#f0f0f0"></div>
<div class="a " style="left:941px;top:230.9px;width:114px;height:13.300000000000006px;background:#fff"></div>
<div class="a " style="left:1055px;top:230.9px;width:124.5px;height:13.300000000000006px;background:#fff;border-left:1px solid #ececec"></div>
<div class="a " style="left:941px;top:244.20000000000002px;width:238.5px;height:0.6px;background:#ededed"></div>
<div class="a t" style="left:942.5px;top:232.55px;font-size:8.73px;line-height:12px;color:#111;font-weight:400;transform:scaleX(0.8475);transform-origin:0 50%;">h<sub>s</sub></div>
<div class="a t" style="left:1057px;top:232.55px;font-size:8.73px;line-height:12px;color:#222;font-weight:400;transform:scaleX(0.8475);transform-origin:0 50%;">2,99</div>
<div class="a t" style="left:1163.5px;top:232.95px;font-size:8.73px;line-height:12px;color:#666;font-weight:400;transform:scaleX(0.8475);transform-origin:0 50%;">m</div>
<div class="a " style="left:932.2px;top:244.8px;width:8.8px;height:14.0px;background:#f0f0f0"></div>
<div class="a " style="left:941px;top:244.8px;width:114px;height:13.4px;background:#fff"></div>
<div class="a " style="left:1055px;top:244.8px;width:124.5px;height:13.4px;background:#f0f0f0;border-left:1px solid #ececec"></div>
<div class="a " style="left:941px;top:258.2px;width:238.5px;height:0.6px;background:#ededed"></div>
<div class="a t" style="left:942.5px;top:246.50px;font-size:8.73px;line-height:12px;color:#999;font-weight:400;transform:scaleX(0.8475);transform-origin:0 50%;">d<sub>fl,0</sub></div>
<div class="a t" style="left:1057px;top:246.50px;font-size:8.73px;line-height:12px;color:#222;font-weight:400;transform:scaleX(0.8475);transform-origin:0 50%;">0,24</div>
<div class="a t" style="left:1163.5px;top:246.90px;font-size:8.73px;line-height:12px;color:#666;font-weight:400;transform:scaleX(0.8475);transform-origin:0 50%;">m</div>
<div class="a " style="left:932.2px;top:258.8px;width:8.8px;height:13.899999999999977px;background:#f0f0f0"></div>
<div class="a " style="left:941px;top:258.8px;width:114px;height:13.299999999999978px;background:#fff"></div>
<div class="a " style="left:1055px;top:258.8px;width:124.5px;height:13.299999999999978px;background:#fff;border-left:1px solid #ececec"></div>
<div class="a " style="left:941px;top:272.09999999999997px;width:238.5px;height:0.6px;background:#ededed"></div>
<div class="a t" style="left:942.5px;top:260.45px;font-size:8.73px;line-height:12px;color:#111;font-weight:400;transform:scaleX(0.8475);transform-origin:0 50%;">d<sub>fl,-1</sub></div>
<div class="a t" style="left:1057px;top:260.45px;font-size:8.73px;line-height:12px;color:#222;font-weight:400;transform:scaleX(0.8475);transform-origin:0 50%;">0,24</div>
<div class="a t" style="left:1163.5px;top:260.85px;font-size:8.73px;line-height:12px;color:#666;font-weight:400;transform:scaleX(0.8475);transform-origin:0 50%;">m</div>
<div class="a " style="left:932.2px;top:272.7px;width:8.8px;height:13.800000000000011px;background:#f0f0f0"></div>
<div class="a " style="left:941px;top:272.7px;width:114px;height:13.200000000000012px;background:#fff"></div>
<div class="a " style="left:1055px;top:272.7px;width:124.5px;height:13.200000000000012px;background:#e6f1fb;border-left:1px solid #ececec"></div>
<div class="a " style="left:941px;top:285.9px;width:238.5px;height:0.6px;background:#ededed"></div>
<div class="a t" style="left:942.5px;top:274.30px;font-size:8.73px;line-height:12px;color:#111;font-weight:400;transform:scaleX(0.8475);transform-origin:0 50%;">Floor</div>
<div class="a t" style="left:1057px;top:274.30px;font-size:8.73px;line-height:12px;color:#3b3bc8;font-weight:400;transform:scaleX(0.8475);transform-origin:0 50%;">91</div>
<div class="a t" style="left:1155.5px;top:274.70px;font-size:8.73px;line-height:12px;color:#666;font-weight:400;transform:scaleX(0.8475);transform-origin:0 50%;">mm</div>
<div class="a " style="left:932.2px;top:286.5px;width:8.8px;height:13.800000000000011px;background:#f0f0f0"></div>
<div class="a " style="left:941px;top:286.5px;width:114px;height:13.200000000000012px;background:#fff"></div>
<div class="a " style="left:1055px;top:286.5px;width:124.5px;height:13.200000000000012px;background:#fff;border-left:1px solid #ececec"></div>
<div class="a " style="left:941px;top:299.7px;width:238.5px;height:0.6px;background:#ededed"></div>
<div class="a t" style="left:942.5px;top:288.10px;font-size:8.73px;line-height:12px;color:#111;font-weight:400;transform:scaleX(0.8475);transform-origin:0 50%;">False ceiling</div>
<div class="a t" style="left:1057px;top:288.10px;font-size:8.73px;line-height:12px;color:#222;font-weight:400;transform:scaleX(0.8475);transform-origin:0 50%;">0,00</div>
<div class="a t" style="left:1163.5px;top:288.50px;font-size:8.73px;line-height:12px;color:#666;font-weight:400;transform:scaleX(0.8475);transform-origin:0 50%;">m</div>
<div class="a " style="left:932.2px;top:300.3px;width:8.8px;height:13.800000000000011px;background:#f0f0f0"></div>
<div class="a " style="left:941px;top:300.3px;width:114px;height:13.200000000000012px;background:#fff"></div>
<div class="a " style="left:1055px;top:300.3px;width:124.5px;height:13.200000000000012px;background:#fff;border-left:1px solid #ececec"></div>
<div class="a " style="left:941px;top:313.5px;width:238.5px;height:0.6px;background:#ededed"></div>
<div class="a t" style="left:942.5px;top:301.90px;font-size:8.73px;line-height:12px;color:#111;font-weight:400;transform:scaleX(0.8475);transform-origin:0 50%;">H<sub>s</sub></div>
<div class="a t" style="left:1057px;top:301.90px;font-size:8.73px;line-height:12px;color:#222;font-weight:400;transform:scaleX(0.8475);transform-origin:0 50%;">0,95</div>
<div class="a t" style="left:1163.5px;top:302.30px;font-size:8.73px;line-height:12px;color:#666;font-weight:400;transform:scaleX(0.8475);transform-origin:0 50%;">m</div>
<div class="a " style="left:932.2px;top:314.1px;width:247.8px;height:13.0px;background:#f0f0f0"></div>
<div class="a" style="left:934.5px;top:318.60px;width:0;height:0;border-left:4px solid transparent;border-bottom:4px solid #333"></div>
<div class="a t" style="left:942.3px;top:315.50px;font-size:10.27px;line-height:12px;color:#8a8a8a;font-weight:400;transform:scaleX(0.8475);transform-origin:0 50%;">Heating</div>
<div class="a " style="left:932.2px;top:327.1px;width:8.8px;height:13.799999999999955px;background:#f0f0f0"></div>
<div class="a " style="left:941px;top:327.1px;width:114px;height:13.199999999999955px;background:#fff"></div>
<div class="a " style="left:1055px;top:327.1px;width:124.5px;height:13.199999999999955px;background:#fff;border-left:1px solid #ececec"></div>
<div class="a " style="left:941px;top:340.29999999999995px;width:238.5px;height:0.6px;background:#ededed"></div>
<div class="a t" style="left:942.5px;top:328.70px;font-size:8.73px;line-height:12px;color:#111;font-weight:400;transform:scaleX(0.8475);transform-origin:0 50%;">ΔH<sub>pipe-run</sub></div>
<div class="a t" style="left:1057px;top:328.70px;font-size:8.73px;line-height:12px;color:#222;font-weight:400;transform:scaleX(0.8475);transform-origin:0 50%;">0,00</div>
<div class="a t" style="left:1163.5px;top:329.10px;font-size:8.73px;line-height:12px;color:#666;font-weight:400;transform:scaleX(0.8475);transform-origin:0 50%;">m</div>
<div class="a " style="left:932.2px;top:340.9px;width:8.8px;height:13.700000000000045px;background:#f0f0f0"></div>
<div class="a " style="left:941px;top:340.9px;width:114px;height:13.100000000000046px;background:#fff"></div>
<div class="a " style="left:1055px;top:340.9px;width:124.5px;height:13.100000000000046px;background:#fff;border-left:1px solid #ececec"></div>
<div class="a " style="left:941px;top:354.0px;width:238.5px;height:0.6px;background:#ededed"></div>
<div class="a t" style="left:942.5px;top:342.45px;font-size:8.73px;line-height:12px;color:#111;font-weight:400;transform:scaleX(0.8475);transform-origin:0 50%;">ΔH<sub>pan. pipe-run</sub></div>
<div class="a t" style="left:1057px;top:342.45px;font-size:8.73px;line-height:12px;color:#222;font-weight:400;transform:scaleX(0.8475);transform-origin:0 50%;">0,10</div>
<div class="a t" style="left:1163.5px;top:342.85px;font-size:8.73px;line-height:12px;color:#666;font-weight:400;transform:scaleX(0.8475);transform-origin:0 50%;">m</div>
<div class="a " style="left:932.2px;top:354.6px;width:8.8px;height:13.799999999999955px;background:#f0f0f0"></div>
<div class="a " style="left:941px;top:354.6px;width:114px;height:13.199999999999955px;background:#fff"></div>
<div class="a " style="left:1055px;top:354.6px;width:124.5px;height:13.199999999999955px;background:#fff;border-left:1px solid #ececec"></div>
<div class="a " style="left:941px;top:367.79999999999995px;width:238.5px;height:0.6px;background:#ededed"></div>
<div class="a t" style="left:942.5px;top:356.20px;font-size:8.73px;line-height:12px;color:#111;font-weight:400;transform:scaleX(0.8475);transform-origin:0 50%;">ΔH<sub>pan. ser. pipe-run</sub></div>
<div class="a t" style="left:1057px;top:356.20px;font-size:8.73px;line-height:12px;color:#222;font-weight:400;transform:scaleX(0.8475);transform-origin:0 50%;">0,20</div>
<div class="a t" style="left:1163.5px;top:356.60px;font-size:8.73px;line-height:12px;color:#666;font-weight:400;transform:scaleX(0.8475);transform-origin:0 50%;">m</div>
<div class="a" style="left:1162.5px;top:156.25px;width:0;height:0;border-left:2.8px solid transparent;border-right:2.8px solid transparent;border-top:3px solid #111"></div>
<div class="a" style="left:1162.5px;top:169.55px;width:0;height:0;border-left:2.8px solid transparent;border-right:2.8px solid transparent;border-top:3px solid #111"></div>
<div class="a" style="left:1162.5px;top:182.85px;width:0;height:0;border-left:2.8px solid transparent;border-right:2.8px solid transparent;border-top:3px solid #111"></div>
<svg class="a" style="left:1170px;top:152.30px" width="9" height="10"><path d="M1 9L2 6L7 1L8.5 2.5L3.5 7.5Z" fill="#f0b020" stroke="#c07010" stroke-width="0.6"/></svg>
<svg class="a" style="left:1170px;top:179.90px" width="9" height="9"><rect x="0.5" y="1" width="7" height="5" fill="#9fd0f0" stroke="#2a8ad0" stroke-width="0.8"/><path d="M2 8H6M4 6V8" stroke="#2a8ad0"/></svg>
<svg class="a" style="left:1170px;top:273.00px" width="9" height="9"><rect x="0.5" y="1" width="7" height="5" fill="#9fd0f0" stroke="#2a8ad0" stroke-width="0.8"/><path d="M2 8H6M4 6V8" stroke="#2a8ad0"/></svg>
<div class="a " style="left:1180.5px;top:138.5px;width:9.5px;height:10px;background:#f6f6f6;border:1px solid #e2e2e2"></div>
<div class="a" style="left:1183px;top:142px;width:0;height:0;border-left:2.5px solid transparent;border-right:2.5px solid transparent;border-bottom:2.5px solid #ccc"></div>
<div class="a " style="left:1180.5px;top:570.5px;width:9.5px;height:10px;background:#f6f6f6;border:1px solid #e2e2e2"></div>
<div class="a" style="left:1183px;top:574px;width:0;height:0;border-left:2.5px solid transparent;border-right:2.5px solid transparent;border-top:2.5px solid #ccc"></div>
<div class="a " style="left:935px;top:239.2px;width:248.5px;height:37.5px;border:3px solid #f20a0a"></div>
<svg class="a" style="left:1115px;top:470px" width="10" height="14"><path d="M1 1V11L3.5 8.5L5.5 13L7 12.3L5 8H8.5Z" fill="#fff" stroke="#444" stroke-width="0.9"/></svg>
<svg class="a" style="left:933px;top:105.5px" width="12" height="12"><rect x="1" y="1" width="7" height="10" fill="#fff" stroke="#aaa" stroke-width="0.6"/><rect x="1" y="1" width="2" height="10" fill="#d03030"/><path d="M3 10L10 2" stroke="#f0b020" stroke-width="2"/></svg>
<svg class="a" style="left:982px;top:108.5px" width="175" height="6"><defs><pattern id="dp" width="2.2" height="2.2" patternUnits="userSpaceOnUse"><circle cx="1.1" cy="1.1" r="0.55" fill="#7ab8f0"/></pattern></defs><rect width="175" height="6" fill="url(#dp)"/></svg>
<div class="a" style="left:1162.3px;top:112px;width:0;height:0;border-left:2.4px solid transparent;border-right:2.4px solid transparent;border-top:2.4px solid #d0e4f8"></div>
<svg class="a" style="left:1171.5px;top:107.5px" width="6" height="9"><path d="M1.5 0.5H4.5V5H1.5ZM0.3 5.2H5.7M3 5V8.5" fill="none" stroke="#b8d6f4" stroke-width="0.9"/></svg>
<svg class="a" style="left:1181.5px;top:108.5px" width="6" height="6"><path d="M0.5 0.5L5.5 5.5M5.5 0.5L0.5 5.5" stroke="#d6e8fa" stroke-width="0.9"/></svg>
<svg class="a" style="left:7px;top:9px" width="11" height="12" viewBox="0 0 11 12"><path d="M5.5 1L1.5 5.5V10.5H4V7.5H7V10.5H9.5V5.5Z" fill="none" stroke="#2b8ad8" stroke-width="1.4"/></svg>
<svg class="a" style="left:24px;top:9px" width="12" height="11" viewBox="0 0 12 11"><path d="M2 5.5A4 4 0 1 1 5 9.8" fill="none" stroke="#1a64c8" stroke-width="2"/><path d="M0 2L4 7L5 2Z" fill="#1a64c8"/></svg>
<svg class="a" style="left:41px;top:9px" width="12" height="11" viewBox="0 0 12 11"><path d="M10 5.5A4 4 0 1 0 7 9.8" fill="none" stroke="#b8b8b8" stroke-width="2"/><path d="M12 2L8 7L7 2Z" fill="#b8b8b8"/></svg>
<svg class="a" style="left:59px;top:9px" width="11" height="11" viewBox="0 0 11 11"><rect x="0.5" y="0.5" width="10" height="10" rx="1" fill="#2b62c8" stroke="#1c3f90"/><rect x="2.5" y="1" width="6" height="3.5" fill="#e8eef8"/><rect x="3" y="7" width="5" height="3" fill="#222"/></svg>
<svg class="a" style="left:76px;top:9px" width="12" height="11" viewBox="0 0 12 11"><path d="M0.5 4.5H5L6 3H11.5L10 10.5H0.5Z" fill="#f0c24a" stroke="#c99a20" stroke-width="0.8"/><path d="M4 4A4 4 0 0 1 10 1.5" fill="none" stroke="#2e9a3a" stroke-width="1.6"/><path d="M8.5 0L11.5 1.5L9 3.5Z" fill="#2e9a3a"/></svg>
<svg class="a" style="left:95px;top:9px" width="9" height="12" viewBox="0 0 9 12"><path d="M0.5 0.5H5.5L8.5 3.5V11.5H0.5Z" fill="#fafafa" stroke="#c8c8c8"/></svg>
<svg class="a" style="left:10px;top:48.5px" width="16" height="19.5" viewBox="0 0 16 19.5"><defs><linearGradient id="cg" x1="0" x2="1"><stop offset="0" stop-color="#9aa6dc"/><stop offset="1" stop-color="#6f7fbf"/></linearGradient></defs><rect x="0.5" y="0.5" width="15" height="18.5" rx="1.5" fill="url(#cg)" stroke="#6a78b4"/><rect x="2" y="2" width="12" height="2.6" fill="#e6eedc"/><rect x="2" y="6.0" width="2.4" height="2.2" fill="#eef0fb"/><rect x="5" y="6.0" width="2.4" height="2.2" fill="#eef0fb"/><rect x="8" y="6.0" width="2.4" height="2.2" fill="#eef0fb"/><rect x="11" y="6.0" width="2.4" height="2.2" fill="#eef0fb"/><rect x="2" y="9.2" width="2.4" height="2.2" fill="#eef0fb"/><rect x="5" y="9.2" width="2.4" height="2.2" fill="#eef0fb"/><rect x="8" y="9.2" width="2.4" height="2.2" fill="#eef0fb"/><rect x="11" y="9.2" width="2.4" height="2.2" fill="#eef0fb"/><rect x="2" y="12.4" width="2.4" height="2.2" fill="#eef0fb"/><rect x="5" y="12.4" width="2.4" height="2.2" fill="#eef0fb"/><rect x="8" y="12.4" width="2.4" height="2.2" fill="#eef0fb"/><rect x="11" y="12.4" width="2.4" height="2.2" fill="#eef0fb"/><rect x="2" y="15.600000000000001" width="2.4" height="2.2" fill="#eef0fb"/><rect x="5" y="15.600000000000001" width="2.4" height="2.2" fill="#eef0fb"/><rect x="8" y="15.600000000000001" width="2.4" height="2.2" fill="#eef0fb"/><rect x="11" y="15.600000000000001" width="2.4" height="2.2" fill="#eef0fb"/><rect x="11" y="6" width="2.4" height="2.2" fill="#e01c1c"/></svg>
<div class="a" style="left:16.5px;top:79.8px;width:0;height:0;border-left:2.5px solid transparent;border-right:2.5px solid transparent;border-top:2.5px solid #444"></div>
<svg class="a" style="left:32.5px;top:52px" width="10" height="12" viewBox="0 0 10 12"><path d="M1 1H9" stroke="#c8c020" stroke-width="1.5"/><path d="M2 2L5 6L8 2" fill="#f2c16a" stroke="#caa040" stroke-width="0.6"/><rect x="0.5" y="6" width="9" height="5.5" fill="#c0461a"/><rect x="4.3" y="7.5" width="1.4" height="2.5" fill="#fff"/></svg>
<svg class="a" style="left:46px;top:52px" width="10" height="12" viewBox="0 0 10 12"><path d="M1 3L5 1L9 3V11.5H1Z" fill="#eee" stroke="#c4c4c4"/><path d="M3 5H7V11" fill="none" stroke="#ccc"/></svg>
<svg class="a" style="left:58px;top:51.5px" width="13" height="13" viewBox="0 0 13 13"><rect width="13" height="13" fill="#f8c600"/><path d="M6.5 1.5V11.5M2.5 4L6.5 6.5L2.5 9" stroke="#24a0c8" stroke-width="1.6" fill="none"/><path d="M7 2A4.5 4.5 0 0 1 7 11" fill="none" stroke="#e8401c" stroke-width="2"/><path d="M7 4.5A2 2 0 0 1 7 8.5" fill="#f4e040"/></svg>
<svg class="a" style="left:74.5px;top:52.5px" width="7" height="11" viewBox="0 0 7 11"><path d="M3.5 0.5C1.5 4 0.5 6 0.5 7.5A3 3 0 0 0 6.5 7.5C6.5 6 5.5 4 3.5 0.5Z" fill="#e6e6e6" stroke="#c4c4c4" stroke-width="0.8"/></svg>
<svg class="a" style="left:32px;top:71px" width="10.5" height="11" viewBox="0 0 10.5 11"><circle cx="6.5" cy="3.5" r="3" fill="#bbb" stroke="#444" stroke-width="1"/><path d="M0.5 7H8" stroke="#a33" stroke-width="2"/><rect x="0" y="9.5" width="10" height="1.5" fill="#c8c8c8"/></svg>
<svg class="a" style="left:46px;top:71.5px" width="10.5" height="11" viewBox="0 0 10.5 11"><rect x="0.5" y="1" width="9.5" height="4" fill="#c8c8c8" stroke="#777"/><ellipse cx="3" cy="9" rx="2" ry="1.3" fill="#f8f000"/><ellipse cx="7.5" cy="9" rx="2" ry="1.3" fill="#f8f000"/></svg>
<svg class="a" style="left:59px;top:71px" width="10.5" height="11" viewBox="0 0 10.5 11"><rect x="0.5" y="0.5" width="6" height="7" fill="#fff" stroke="#d8b8b8"/><path d="M1.5 2L5 6" stroke="#d04040" stroke-width="1"/><rect x="3.5" y="4" width="6.5" height="6.5" fill="#e9d48c" stroke="#a08050" stroke-width="0.8"/><path d="M5 9L9 5" stroke="#e07020" stroke-width="1.4"/></svg>
<svg class="a" style="left:91px;top:52px" width="12" height="11" viewBox="0 0 12 11"><path d="M3 5A4 4 0 1 1 6 9.5" fill="none" stroke="#1f6fd6" stroke-width="2.2"/><path d="M0.5 2L5.5 6.5L0.5 8Z" fill="#1f6fd6"/></svg>
<svg class="a" style="left:105.5px;top:52px" width="11" height="12" viewBox="0 0 11 12"><rect x="0.5" y="0.5" width="6" height="8.5" fill="#f6f6f6" stroke="#bbb"/><rect x="3.5" y="2.5" width="6.5" height="9" fill="#eee" stroke="#aaa"/><rect x="5" y="5" width="3.5" height="5" fill="#ccc"/></svg>
<svg class="a" style="left:119px;top:52px" width="11" height="12" viewBox="0 0 11 12"><rect x="0.5" y="1" width="6.5" height="9.5" rx="1" fill="#e08a1c" stroke="#b05a08"/><rect x="2" y="0" width="3.5" height="2" fill="#999"/><rect x="4.5" y="3.5" width="6" height="8" fill="#f0f0f0" stroke="#b8b8b8"/></svg>
<svg class="a" style="left:132.5px;top:52px" width="11" height="12" viewBox="0 0 11 12"><path d="M3.5 0.5L6 6.5M8 0.5L5.5 6.5" stroke="#666" stroke-width="1.6"/><circle cx="3" cy="9" r="2" fill="none" stroke="#f08010" stroke-width="1.5"/><circle cx="8.5" cy="9" r="2" fill="none" stroke="#f08010" stroke-width="1.5"/></svg>
<svg class="a" style="left:146px;top:52px" width="11.5" height="11.5" viewBox="0 0 11.5 11.5"><path d="M2 2L9.5 9.5M9.5 2L2 9.5" stroke="#e01818" stroke-width="3.2" stroke-linecap="round"/></svg>
<svg class="a" style="left:160px;top:52px" width="11" height="12" viewBox="0 0 11 12"><rect x="0.5" y="0.5" width="10" height="4" fill="#fff" stroke="#888"/><rect x="7" y="2" width="2.5" height="1.5" fill="#4aa0e0"/><path d="M5 3V9" stroke="#f0c020" stroke-width="2.2"/><circle cx="5" cy="3.5" r="1.3" fill="#d02020"/><path d="M0.5 10H10.5" stroke="#e04040" stroke-width="1.3"/></svg>
<svg class="a" style="left:173.5px;top:52px" width="11" height="12" viewBox="0 0 11 12"><path d="M1 6L5.5 1L10 6M3 6V11H8.5" fill="none" stroke="#ccc" stroke-width="1"/></svg>
<svg class="a" style="left:187px;top:52px" width="11" height="12" viewBox="0 0 11 12"><rect x="0.5" y="2" width="9.5" height="9.5" fill="#f2f2f2" stroke="#bbb" stroke-width="0.8"/><path d="M5.5 0.5L9 4.5H7V11H4V4.5H2Z" fill="#1c7ce0" stroke="#0a4ea8" stroke-width="0.6"/></svg>
<svg class="a" style="left:200px;top:52px" width="11" height="11" viewBox="0 0 11 11"><circle cx="5.5" cy="5.5" r="4.5" fill="none" stroke="#e4e4e4" stroke-width="1"/></svg>
<div class="a" style="left:212.9px;top:56.8px;width:0;height:0;border-left:2.5px solid transparent;border-right:2.5px solid transparent;border-top:2.5px solid #555"></div>
<svg class="a" style="left:160px;top:70.5px" width="11" height="12" viewBox="0 0 11 12"><rect x="0.5" y="0.5" width="10" height="11" fill="#fff" stroke="#bbb" stroke-width="0.8"/><path d="M3 1V10M8 1V10" stroke="#e02020"/><path d="M5.5 2V10" stroke="#80c020" stroke-width="2"/><circle cx="2.5" cy="10" r="1.5" fill="#1c3cf0"/><circle cx="8.5" cy="10" r="1.5" fill="#1c3cf0"/></svg>
<svg class="a" style="left:91px;top:70.5px" width="12" height="11" viewBox="0 0 12 11"><path d="M9 5.5A4 4 0 1 0 6 9.5" fill="none" stroke="#c8c8c8" stroke-width="2.2"/><path d="M11.5 2L6.5 6.5L11.5 8Z" fill="#c8c8c8"/></svg>
<svg class="a" style="left:105.5px;top:70.5px" width="11" height="12" viewBox="0 0 11 12"><rect x="0.5" y="1" width="10" height="10" fill="#fafafa" stroke="#999"/><path d="M5.5 0V12" stroke="#888" stroke-dasharray="2 1"/></svg>
<svg class="a" style="left:119.5px;top:70.5px" width="10" height="12" viewBox="0 0 10 12"><path d="M5 0V12" stroke="#777"/><ellipse cx="5" cy="6" rx="2" ry="1.6" fill="#fff" stroke="#888"/></svg>
<svg class="a" style="left:133px;top:70.5px" width="10" height="12" viewBox="0 0 10 12"><path d="M5 0V12" stroke="#777" stroke-width="1.2"/><rect x="3" y="4.5" width="4" height="3" fill="#666"/></svg>
<svg class="a" style="left:146.5px;top:70.5px" width="11" height="12" viewBox="0 0 11 12"><path d="M0.5 1V11H10.5M0.5 5H6M0.5 8H6M3 1V11M6 1V11" fill="none" stroke="#aaa" stroke-width="0.8"/><path d="M7 4L9 7H7Z" fill="#e03030"/><rect x="7" y="8.5" width="3.5" height="2.5" fill="#f0e000"/></svg>
<svg class="a" style="left:173.5px;top:71.5px" width="11" height="10" viewBox="0 0 11 10"><path d="M0.5 2H10.5" stroke="#999"/><rect x="0.5" y="4.5" width="10" height="4" fill="#c8c8c8" stroke="#888" stroke-width="0.8"/></svg>
<svg class="a" style="left:187px;top:70.5px" width="11" height="12" viewBox="0 0 11 12"><rect x="0.5" y="0.5" width="9.5" height="9.5" fill="#f2f2f2" stroke="#bbb" stroke-width="0.8"/><path d="M5.5 11.5L9 7.5H7V1H4V7.5H2Z" fill="#1c7ce0" stroke="#0a4ea8" stroke-width="0.6"/></svg>
<svg class="a" style="left:222.3px;top:49.3px" width="17.5" height="18.5" viewBox="0 0 17.5 18.5"><rect x="0.75" y="0.75" width="16" height="17" fill="none" stroke="#777" stroke-width="1" stroke-dasharray="2.5 2"/><path d="M6 12L8.75 5L11.5 12M7 9.8H10.5" fill="none" stroke="#555" stroke-width="0.8"/></svg>
<div class="a t" style="left:131px;width:200px;text-align:center;top:68.00px;font-size:8.61px;line-height:12px;color:#3c3c50;font-weight:400;transform:scaleX(0.8475);transform-origin:50% 50%;">Select</div>
<div class="a" style="left:228.5px;top:79.8px;width:0;height:0;border-left:2.5px solid transparent;border-right:2.5px solid transparent;border-top:2.5px solid #444"></div>
<svg class="a" style="left:249.5px;top:52px" width="12" height="12" viewBox="0 0 12 12"><path d="M1.5 10.5L4.5 7.5" stroke="#f08a1c" stroke-width="2.2" stroke-linecap="round"/><circle cx="7.3" cy="4.7" r="3.8" fill="#fff" stroke="#6a8aa8" stroke-width="1"/><path d="M7.3 2.7V6.7M5.3 4.7H9.3" stroke="#12a02a" stroke-width="1.8"/></svg>
<svg class="a" style="left:263px;top:52px" width="12" height="12" viewBox="0 0 12 12"><path d="M1.5 10.5L4.5 7.5" stroke="#f08a1c" stroke-width="2.2" stroke-linecap="round"/><circle cx="7.3" cy="4.7" r="3.8" fill="#fff" stroke="#6a8aa8" stroke-width="1"/><path d="M5.3 4.7H9.3" stroke="#e02020" stroke-width="1.8"/></svg>
<svg class="a" style="left:276.5px;top:52px" width="12" height="12" viewBox="0 0 12 12"><path d="M1.5 10.5L4.5 7.5" stroke="#f08a1c" stroke-width="2.2" stroke-linecap="round"/><circle cx="7.3" cy="4.7" r="3.8" fill="#dfe8ff" stroke="#6a8aa8" stroke-width="1"/><path d="M5.5 7L7.3 2.5L9.1 7" fill="none" stroke="#1f60d8" stroke-width="1.4"/></svg>
<svg class="a" style="left:290px;top:52px" width="11" height="11" viewBox="0 0 11 11"><rect x="0.5" y="0.5" width="10" height="10" fill="none" stroke="#bbb" stroke-dasharray="1.5 1.5"/></svg>
<div class="a" style="left:302.8px;top:56.8px;width:0;height:0;border-left:2.5px solid transparent;border-right:2.5px solid transparent;border-top:2.5px solid #555"></div>
<svg class="a" style="left:250px;top:70.5px" width="11" height="12" viewBox="0 0 11 12"><rect x="0.5" y="0.5" width="10" height="10" fill="none" stroke="#888" stroke-dasharray="1.5 2"/><path d="M2 7A3.5 3 0 0 1 9 7" fill="none" stroke="#aaa"/></svg>
<svg class="a" style="left:263px;top:70.5px" width="12" height="12" viewBox="0 0 12 12"><path d="M1.5 10.5L4.5 7.5" stroke="#f08a1c" stroke-width="2.2" stroke-linecap="round"/><circle cx="7.3" cy="4.7" r="3.8" fill="#e6f2ff" stroke="#6a8aa8" stroke-width="1"/></svg>
<svg class="a" style="left:276.5px;top:70.5px" width="12" height="12" viewBox="0 0 12 12"><path d="M1.5 10.5L4.5 7.5" stroke="#f08a1c" stroke-width="2.2" stroke-linecap="round"/><circle cx="7.3" cy="4.7" r="3.8" fill="#e6f2ff" stroke="#6a8aa8" stroke-width="1"/></svg>
<svg class="a" style="left:290px;top:70.5px" width="11" height="12" viewBox="0 0 11 12"><rect x="0.5" y="4.5" width="6" height="6" fill="none" stroke="#c8c8c8"/><rect x="4.5" y="0.5" width="6" height="6" fill="none" stroke="#c8c8c8"/></svg>
<div class="a" style="left:302.8px;top:74.8px;width:0;height:0;border-left:2.5px solid transparent;border-right:2.5px solid transparent;border-top:2.5px solid #555"></div>
<svg class="a" style="left:320px;top:48px" width="20" height="20" viewBox="0 0 20 20"><rect x="0.5" y="0.5" width="15" height="19" rx="1" fill="#f2f2f2" stroke="#c8c8c8"/><path d="M2 3.0H8" stroke="#aaa" stroke-width="0.8"/><path d="M2 5.6H8" stroke="#aaa" stroke-width="0.8"/><path d="M2 8.2H8" stroke="#aaa" stroke-width="0.8"/><path d="M2 10.8H8" stroke="#aaa" stroke-width="0.8"/><path d="M2 13.4H8" stroke="#aaa" stroke-width="0.8"/><path d="M2 16.0H8" stroke="#aaa" stroke-width="0.8"/><path d="M3 4.5H13" stroke="#d8905a" stroke-width="1.8"/><rect x="9" y="3.5" width="7" height="6" rx="2" fill="#d89a68"/><rect x="15.5" y="4" width="3.5" height="5.5" fill="#222"/></svg>
<div class="a" style="left:327.5px;top:79.8px;width:0;height:0;border-left:2.5px solid transparent;border-right:2.5px solid transparent;border-top:2.5px solid #444"></div>
<svg class="a" style="left:351.3px;top:48px" width="20" height="20" viewBox="0 0 20 20"><rect x="0.5" y="0.5" width="13" height="12" fill="#fff" stroke="#e06040"/><rect x="2.5" y="2.5" width="9" height="7" fill="#f4d0c4" stroke="#e06040" stroke-width="0.8"/><rect x="0.5" y="11.5" width="13" height="2" fill="#e8501e"/><path d="M6 13.5V19.5H19V8M14 7V11" fill="none" stroke="#666" stroke-width="1.2"/><rect x="7.5" y="13.5" width="8" height="5" fill="#f8f0e0"/><rect x="14" y="15" width="2.5" height="2" fill="#e02030"/></svg>
<div class="a t" style="left:261.6px;width:200px;text-align:center;top:68.00px;font-size:8.61px;line-height:12px;color:#3c3c50;font-weight:400;transform:scaleX(0.8475);transform-origin:50% 50%;">Floor</div>
<div class="a" style="left:359.1px;top:79.8px;width:0;height:0;border-left:2.5px solid transparent;border-right:2.5px solid transparent;border-top:2.5px solid #444"></div>
<svg class="a" style="left:378.7px;top:48px" width="20" height="20" viewBox="0 0 20 20"><rect x="0.5" y="0.5" width="19" height="19" fill="#f8f8f8" stroke="#999" stroke-width="1"/><rect x="1" y="1" width="3" height="18" fill="#f0501e"/><rect x="6.5" y="3.5" width="10" height="12" rx="2" fill="none" stroke="#e07050" stroke-width="1"/><path d="M9 6V13H14V6H11V11" fill="none" stroke="#e07050" stroke-width="0.8"/></svg>
<div class="a t" style="left:288.7px;width:200px;text-align:center;top:68.00px;font-size:8.61px;line-height:12px;color:#3c3c50;font-weight:400;transform:scaleX(0.8475);transform-origin:50% 50%;">Wall</div>
<div class="a t" style="left:288.7px;width:200px;text-align:center;top:74.70px;font-size:8.61px;line-height:12px;color:#3c3c50;font-weight:400;transform:scaleX(0.8475);transform-origin:50% 50%;">(manual)</div>
<svg class="a" style="left:407px;top:48px" width="20" height="20" viewBox="0 0 20 20"><rect x="0.5" y="0.5" width="13" height="12" fill="#f4f4f4" stroke="#ccc"/><rect x="2.5" y="2.5" width="9" height="7" fill="#eee" stroke="#ccc" stroke-width="0.8"/><path d="M6 13V19.5H19V8" fill="none" stroke="#ccc" stroke-width="1.2"/></svg>
<div class="a t" style="left:317px;width:200px;text-align:center;top:68.00px;font-size:8.61px;line-height:12px;color:#aaa;font-weight:400;transform:scaleX(0.8475);transform-origin:50% 50%;">Ceiling</div>
<div class="a" style="left:414.5px;top:79.8px;width:0;height:0;border-left:2.5px solid transparent;border-right:2.5px solid transparent;border-top:2.5px solid #aaa"></div>
<svg class="a" style="left:439px;top:48px" width="19" height="20" viewBox="0 0 19 20"><path d="M1 0V19H18.5" fill="none" stroke="#555" stroke-width="1"/><path d="M1.5 2L4 3.5L1.5 5" fill="none" stroke="#666" stroke-width="0.7"/><path d="M1.5 6L4 7.5L1.5 9" fill="none" stroke="#666" stroke-width="0.7"/><path d="M1.5 10L4 11.5L1.5 13" fill="none" stroke="#666" stroke-width="0.7"/><path d="M1.5 14L4 15.5L1.5 17" fill="none" stroke="#666" stroke-width="0.7"/><path d="M6 18L7.5 16L9 18" fill="none" stroke="#666" stroke-width="0.7"/><path d="M10 18L11.5 16L13 18" fill="none" stroke="#666" stroke-width="0.7"/><path d="M14 18L15.5 16L17 18" fill="none" stroke="#666" stroke-width="0.7"/></svg>
<div class="a t" style="left:349px;width:200px;text-align:center;top:68.00px;font-size:7.91px;line-height:12px;color:#333;font-weight:700;transform:scaleX(0.8475);transform-origin:50% 50%;">Pipe feeds</div>
<div class="a t" style="left:349px;width:200px;text-align:center;top:74.70px;font-size:7.91px;line-height:12px;color:#333;font-weight:700;transform:scaleX(0.8475);transform-origin:50% 50%;">route</div>
<svg class="a" style="left:471px;top:48px" width="20" height="19" viewBox="0 0 20 19"><rect x="0.5" y="1.5" width="19" height="17" fill="#f8f8f8" stroke="#ddd"/><rect x="1" y="6" width="12" height="12" fill="#ebebeb"/><path d="M13 2V18M13 7H19" stroke="#ccc" stroke-width="0.8"/></svg>
<div class="a t" style="left:380.5px;width:200px;text-align:center;top:68.00px;font-size:8.61px;line-height:12px;color:#aaa;font-weight:400;transform:scaleX(0.8475);transform-origin:50% 50%;">Ceiling</div>
<div class="a t" style="left:378.5px;width:200px;text-align:center;top:74.70px;font-size:8.61px;line-height:12px;color:#aaa;font-weight:400;transform:scaleX(0.8475);transform-origin:50% 50%;">panel</div>
<div class="a" style="left:486.5px;top:79.8px;width:0;height:0;border-left:2.5px solid transparent;border-right:2.5px solid transparent;border-top:2.5px solid #aaa"></div>
<svg class="a" style="left:496.3px;top:48px" width="20" height="20" viewBox="0 0 20 20"><rect x="0.5" y="0.5" width="19" height="19" rx="1" fill="#fff" stroke="#bbb"/><path d="M2 2V18" stroke="#e4e4e4" stroke-width="0.7"/><path d="M5 2V18" stroke="#e4e4e4" stroke-width="0.7"/><path d="M8 2V18" stroke="#e4e4e4" stroke-width="0.7"/><path d="M11 2V18" stroke="#e4e4e4" stroke-width="0.7"/><path d="M14 2V18" stroke="#e4e4e4" stroke-width="0.7"/><path d="M17 2V18" stroke="#e4e4e4" stroke-width="0.7"/><path d="M2 2H18" stroke="#e4e4e4" stroke-width="0.7"/><path d="M2 5H18" stroke="#e4e4e4" stroke-width="0.7"/><path d="M2 8H18" stroke="#e4e4e4" stroke-width="0.7"/><path d="M2 11H18" stroke="#e4e4e4" stroke-width="0.7"/><path d="M2 14H18" stroke="#e4e4e4" stroke-width="0.7"/><path d="M2 17H18" stroke="#e4e4e4" stroke-width="0.7"/></svg>
<div class="a t" style="left:406.3px;width:200px;text-align:center;top:68.00px;font-size:7.91px;line-height:12px;color:#333;font-weight:700;transform:scaleX(0.8475);transform-origin:50% 50%;">Wall</div>
<div class="a t" style="left:406.3px;width:200px;text-align:center;top:74.70px;font-size:7.91px;line-height:12px;color:#333;font-weight:700;transform:scaleX(0.8475);transform-origin:50% 50%;">panel</div>
<svg class="a" style="left:527px;top:48px" width="20" height="20" viewBox="0 0 20 20"><rect x="0.5" y="0.5" width="19" height="19" fill="#f9f9f9" stroke="#eee"/><path d="M1.0 1V19" stroke="#e2e2e2" stroke-width="0.8"/><path d="M4.3 1V19" stroke="#e2e2e2" stroke-width="0.8"/><path d="M7.6 1V19" stroke="#e2e2e2" stroke-width="0.8"/><path d="M10.899999999999999 1V19" stroke="#e2e2e2" stroke-width="0.8"/><path d="M14.2 1V19" stroke="#e2e2e2" stroke-width="0.8"/><path d="M17.5 1V19" stroke="#e2e2e2" stroke-width="0.8"/><path d="M1 4H19M1 7H19" stroke="#e2e2e2" stroke-width="0.8"/></svg>
<div class="a t" style="left:437px;width:200px;text-align:center;top:68.00px;font-size:8.61px;line-height:12px;color:#aaa;font-weight:400;transform:scaleX(0.8475);transform-origin:50% 50%;">Dry system</div>
<div class="a t" style="left:437px;width:200px;text-align:center;top:74.70px;font-size:8.61px;line-height:12px;color:#aaa;font-weight:400;transform:scaleX(0.8475);transform-origin:50% 50%;">plate</div>
<svg class="a" style="left:556.5px;top:52.5px" width="10" height="10" viewBox="0 0 10 10"><rect x="0" y="1" width="10" height="8" fill="#e8b0a0"/><path d="M5 0V10M2 0.5H8M2 9.5H8" stroke="#888" stroke-width="1"/></svg>
<svg class="a" style="left:556px;top:70.5px" width="11" height="11" viewBox="0 0 11 11"><rect x="0.5" y="0.5" width="10" height="10" fill="#fafafa" stroke="#777"/><path d="M5.5 0V11" stroke="#777" stroke-dasharray="2 1"/></svg>
<div class="a" style="left:568.5px;top:74.8px;width:0;height:0;border-left:2.5px solid transparent;border-right:2.5px solid transparent;border-top:2.5px solid #555"></div>
<svg class="a" style="left:587px;top:50px" width="19" height="17" viewBox="0 0 19 17"><rect x="0" y="0" width="19" height="7" rx="1" fill="#e8481c"/><path d="M1 3.5H18" stroke="#fff" stroke-width="0.5"/><rect x="0" y="9.5" width="19" height="7" rx="1" fill="#2a8ae8"/><path d="M1 13H18" stroke="#fff" stroke-width="0.5"/></svg>
<div class="a t" style="left:496.29999999999995px;width:200px;text-align:center;top:68.00px;font-size:8.61px;line-height:12px;color:#3c3c50;font-weight:400;transform:scaleX(0.8475);transform-origin:50% 50%;">Supply</div>
<div class="a t" style="left:494.5px;width:200px;text-align:center;top:74.70px;font-size:8.61px;line-height:12px;color:#3c3c50;font-weight:400;transform:scaleX(0.8475);transform-origin:50% 50%;">Return</div>
<div class="a" style="left:604.5px;top:79.8px;width:0;height:0;border-left:2.5px solid transparent;border-right:2.5px solid transparent;border-top:2.5px solid #444"></div>
<svg class="a" style="left:617px;top:48px" width="17" height="20" viewBox="0 0 17 20"><rect x="0.5" y="0.5" width="16" height="18" rx="2" fill="#f6f6f6" stroke="#888"/><path d="M8.5 1V14" stroke="#ccc"/><rect x="2.5" y="14" width="12" height="3" fill="#999"/><rect x="7" y="14.5" width="3" height="2" fill="#40c0d0"/><rect x="6" y="19" width="2" height="1" fill="#2060e0"/><rect x="9" y="19" width="2" height="1" fill="#e02020"/></svg>
<div class="a t" style="left:525px;width:200px;text-align:center;top:68.00px;font-size:8.61px;line-height:12px;color:#3c3c50;font-weight:400;transform:scaleX(0.8475);transform-origin:50% 50%;">Source</div>
<svg class="a" style="left:639px;top:48px" width="20" height="20" viewBox="0 0 20 20"><rect x="0.5" y="0.5" width="19" height="19" fill="none" stroke="#888" stroke-dasharray="2 2"/><circle cx="8" cy="6" r="4" fill="none" stroke="#888" stroke-width="0.8"/><circle cx="8" cy="14" r="4" fill="none" stroke="#888" stroke-width="0.8"/><path d="M9 10L17 2" stroke="#f0a020" stroke-width="2.2"/><path d="M16 1L18.5 3" stroke="#e05030" stroke-width="1.5"/></svg>
<div class="a t" style="left:549px;width:200px;text-align:center;top:68.00px;font-size:8.61px;line-height:12px;color:#3c3c50;font-weight:400;transform:scaleX(0.8475);transform-origin:50% 50%;">Riser</div>
<svg class="a" style="left:671.7px;top:49px" width="19" height="18" viewBox="0 0 19 18"><rect x="0" y="1" width="8" height="6" rx="1" fill="#e8481c"/><rect x="10" y="1" width="8.5" height="6" rx="1" fill="#e8481c"/><rect x="0" y="10" width="8" height="6" rx="1" fill="#2a8ae8"/><rect x="10" y="10" width="8.5" height="6" rx="1" fill="#2a8ae8"/><path d="M0 4H18M0 13H18" stroke="#fff" stroke-width="0.4"/></svg>
<div class="a t" style="left:581px;width:200px;text-align:center;top:68.00px;font-size:8.61px;line-height:12px;color:#3c3c50;font-weight:400;transform:scaleX(0.8475);transform-origin:50% 50%;">Remote</div>
<div class="a t" style="left:581px;width:200px;text-align:center;top:74.70px;font-size:8.61px;line-height:12px;color:#3c3c50;font-weight:400;transform:scaleX(0.8475);transform-origin:50% 50%;">connection</div>
<svg class="a" style="left:703.7px;top:49px" width="18" height="18" viewBox="0 0 18 18"><rect x="0" y="0" width="18" height="9" fill="#e8301c"/><rect x="9" y="0" width="9" height="6" fill="#f040d0"/><rect x="0" y="9" width="18" height="9" fill="#3a9af0"/><rect x="0.5" y="0.5" width="17" height="17" fill="none" stroke="#2c5aa0" stroke-width="0.8"/><rect x="4" y="4" width="10" height="10" fill="#fff" stroke="#555" stroke-width="0.6"/><path d="M7.5 6L10.5 9L7.5 12" fill="none" stroke="#555" stroke-width="1.2"/></svg>
<div class="a t" style="left:613px;width:200px;text-align:center;top:68.00px;font-size:8.61px;line-height:12px;color:#3c3c50;font-weight:400;transform:scaleX(0.8475);transform-origin:50% 50%;">Mixer</div>
<svg class="a" style="left:731.7px;top:48px" width="20" height="20" viewBox="0 0 20 20"><rect x="0.5" y="3" width="18" height="4" fill="#d8c898" stroke="#a89060" stroke-width="0.6"/><rect x="0.5" y="10.5" width="18" height="4" fill="#d8c898" stroke="#a89060" stroke-width="0.6"/><circle cx="3" cy="1.5" r="1.3" fill="none" stroke="#aaa" stroke-width="0.7"/><rect x="2" y="8" width="2" height="1.6" fill="#e03030"/><rect x="2" y="16.5" width="2" height="2" fill="#2a7ae8"/><circle cx="7" cy="1.5" r="1.3" fill="none" stroke="#aaa" stroke-width="0.7"/><rect x="6" y="8" width="2" height="1.6" fill="#e03030"/><rect x="6" y="16.5" width="2" height="2" fill="#2a7ae8"/><circle cx="11" cy="1.5" r="1.3" fill="none" stroke="#aaa" stroke-width="0.7"/><rect x="10" y="8" width="2" height="1.6" fill="#e03030"/><rect x="10" y="16.5" width="2" height="2" fill="#2a7ae8"/><circle cx="15" cy="1.5" r="1.3" fill="none" stroke="#aaa" stroke-width="0.7"/><rect x="14" y="8" width="2" height="1.6" fill="#e03030"/><rect x="14" y="16.5" width="2" height="2" fill="#2a7ae8"/><circle cx="19" cy="1.5" r="1.3" fill="none" stroke="#aaa" stroke-width="0.7"/><rect x="18" y="8" width="2" height="1.6" fill="#e03030"/><rect x="18" y="16.5" width="2" height="2" fill="#2a7ae8"/></svg>
<div class="a t" style="left:641.7px;width:200px;text-align:center;top:68.00px;font-size:8.61px;line-height:12px;color:#3c3c50;font-weight:400;transform:scaleX(0.8475);transform-origin:50% 50%;">Manifold</div>
<svg class="a" style="left:760px;top:48px" width="19" height="20" viewBox="0 0 19 20"><rect x="0" y="11" width="19" height="8" rx="1.5" fill="#cbb888" stroke="#8a7848" stroke-width="0.8"/><path d="M5 12L13 3" stroke="#bba570" stroke-width="4"/><path d="M11 1L17 5" stroke="#6a5a30" stroke-width="2"/></svg>
<div class="a t" style="left:669.7px;width:200px;text-align:center;top:68.00px;font-size:8.61px;line-height:12px;color:#3c3c50;font-weight:400;transform:scaleX(0.8475);transform-origin:50% 50%;">Valve</div>
<div class="a" style="left:767.2px;top:79.8px;width:0;height:0;border-left:2.5px solid transparent;border-right:2.5px solid transparent;border-top:2.5px solid #444"></div>
<svg class="a" style="left:787.7px;top:48px" width="15" height="20" viewBox="0 0 15 20"><rect x="6.5" y="0" width="2" height="20" fill="#333"/><circle cx="7.5" cy="10" r="5.5" fill="#c04848" stroke="#802020"/><path d="M4.5 12L7.5 8L10.5 12Z" fill="#333"/><rect x="0" y="8" width="3" height="4" fill="#333"/></svg>
<div class="a t" style="left:696.3px;width:200px;text-align:center;top:68.00px;font-size:8.61px;line-height:12px;color:#3c3c50;font-weight:400;transform:scaleX(0.8475);transform-origin:50% 50%;">Fittings</div>
<div class="a" style="left:793.8px;top:79.8px;width:0;height:0;border-left:2.5px solid transparent;border-right:2.5px solid transparent;border-top:2.5px solid #444"></div>
<svg class="a" style="left:817px;top:48px" width="20" height="20" viewBox="0 0 20 20"><path d="M0.5 4L7 9" stroke="#888" stroke-width="0.8"/><rect x="7" y="6" width="12" height="6.5" fill="#fff" stroke="#888" stroke-width="0.8"/><path d="M10 9.5H16" stroke="#bbb" stroke-dasharray="1 1"/></svg>
<div class="a t" style="left:727.7px;width:200px;text-align:center;top:68.00px;font-size:8.61px;line-height:12px;color:#3c3c50;font-weight:400;transform:scaleX(0.8475);transform-origin:50% 50%;">Label</div>
<div class="a" style="left:825.2px;top:79.8px;width:0;height:0;border-left:2.5px solid transparent;border-right:2.5px solid transparent;border-top:2.5px solid #444"></div>
<svg class="a" style="left:858.7px;top:47.5px" width="18" height="20" viewBox="0 0 18 20"><text x="9" y="6.5" font-size="7" text-anchor="middle" fill="#222" font-family="Liberation Sans">2.0</text><path d="M1 6V17M17 6V17" stroke="#2a88e8" stroke-width="1"/><path d="M1 9H17" stroke="#2a88e8" stroke-width="1"/><path d="M1 9L3.5 7.5V10.5ZM17 9L14.5 7.5V10.5Z" fill="#2a88e8"/></svg>
<div class="a t" style="left:767.3px;width:200px;text-align:center;top:68.00px;font-size:8.61px;line-height:12px;color:#3c3c50;font-weight:400;transform:scaleX(0.8475);transform-origin:50% 50%;">Horizontal</div>
<div class="a t" style="left:765.5px;width:200px;text-align:center;top:74.70px;font-size:8.50px;line-height:12px;color:#3c3c50;font-weight:400;transform:scaleX(0.8475);transform-origin:50% 50%;">dimension line</div>
<div class="a" style="left:887.5px;top:79.8px;width:0;height:0;border-left:2.5px solid transparent;border-right:2.5px solid transparent;border-top:2.5px solid #444"></div>
<svg class="a" style="left:896.5px;top:52.5px" width="11" height="11" viewBox="0 0 11 11"><rect x="0.5" y="0.5" width="10" height="10" fill="#f4f4f4" stroke="#ddd"/><path d="M2 8L8 2" stroke="#ddd"/></svg>
<svg class="a" style="left:910.5px;top:52.5px" width="11" height="11" viewBox="0 0 11 11"><rect x="0" y="0" width="2" height="11" fill="#c02010"/><rect x="2" y="2" width="9" height="2" fill="#d8c898"/><rect x="2" y="5" width="9" height="2" fill="#888"/><rect x="2" y="8" width="9" height="2.5" fill="#e8c020"/></svg>
<svg class="a" style="left:923.5px;top:52.5px" width="11" height="11" viewBox="0 0 11 11"><path d="M1 1H10" stroke="#c8a860" stroke-dasharray="1 1" stroke-width="1.5"/><rect x="0.5" y="3" width="6" height="2" fill="#e04030"/><rect x="0.5" y="6" width="6" height="2" fill="#d8c070"/><rect x="0.5" y="8.5" width="6" height="2" fill="#3a8ae8"/><rect x="6.5" y="3" width="4" height="8" fill="#ddd" stroke="#aaa" stroke-width="0.6"/></svg>
<svg class="a" style="left:937px;top:52px" width="11" height="11" viewBox="0 0 11 11"><rect x="0" y="0" width="11" height="11" fill="#e04030"/><rect x="6" y="0" width="5" height="4" fill="#f040d0"/><rect x="0" y="6" width="5" height="5" fill="#3a8ae8"/><rect x="3" y="3" width="7" height="7" fill="#fff" stroke="#777" stroke-width="0.6"/></svg>
<svg class="a" style="left:896.5px;top:71px" width="11" height="11" viewBox="0 0 11 11"><rect x="0.5" y="0.5" width="10" height="10" fill="#f6f6f6" stroke="#ddd"/><path d="M3.5 0.5V10.5M7 0.5V10.5" stroke="#ddd"/></svg>
<svg class="a" style="left:910.5px;top:72px" width="11" height="9" viewBox="0 0 11 9"><path d="M1 5L6 2L10 4L9 8H2Z" fill="#e8e020" stroke="#a09010" stroke-width="0.6"/><path d="M8 0V4" stroke="#222" stroke-width="1.3"/></svg>
<div class="a t" style="left:924px;top:70.00px;font-size:7.79px;line-height:12px;color:#222;font-weight:400;transform:scaleX(0.8475);transform-origin:0 50%;">Abc</div>
<svg class="a" style="left:0;top:0;font-family:'Liberation Sans'" width="1200" height="655"><path d="M465 545V297.2L504.1 251.2L543.6 297.2V545Z" fill="#c5dafc" stroke="#86a6dc" stroke-width="1"/><rect x="465" y="412" width="78.6" height="67" fill="#93a8d3"/><path d="M465 412V479M543.6 412V479" stroke="#7d95c8" stroke-width="1"/><path d="M465.3 297.4L504.1 251.8L543.3 297.4" fill="none" stroke="#4f5f7a" stroke-width="0.9"/><path d="M465.3 304.1L504.1 258.7L543.3 304.1" fill="none" stroke="#333" stroke-width="0.8"/><rect x="350.5" y="478.7" width="114.5" height="5" fill="#b3b3b3" stroke="#555" stroke-width="0.9"/><rect x="543.6" y="478.7" width="86" height="5" fill="#b3b3b3" stroke="#555" stroke-width="0.9"/><path d="M356 483.5L360 479 M365.5 483.5L369.5 479 M375.0 483.5L379.0 479 M384.5 483.5L388.5 479 M394.0 483.5L398.0 479 M403.5 483.5L407.5 479 M413.0 483.5L417.0 479 M422.5 483.5L426.5 479 M432.0 483.5L436.0 479 M441.5 483.5L445.5 479 M451.0 483.5L455.0 479 M460.5 483.5L464.5 479 M555.5 483.5L559.5 479 M565.0 483.5L569.0 479 M574.5 483.5L578.5 479 M584.0 483.5L588.0 479 M593.5 483.5L597.5 479 M603.0 483.5L607.0 479 M612.5 483.5L616.5 479 M622.0 483.5L626.0 479" stroke="#444" stroke-width="0.6"/><path d="M465 483.7H543.6" stroke="#6f8fc8" stroke-width="0.8"/><path d="M465 479H543.6" stroke="#5f7fb8" stroke-width="0.8"/><path d="M408 250.5H559.3" stroke="#7a7a7a" stroke-width="1"/><path d="M408 345.5H559.3" stroke="#3a3a3a" stroke-width="1"/><path d="M408 350.8H559.3" stroke="#9a9a9a" stroke-width="1"/><path d="M408 412H559.3" stroke="#9a9a9a" stroke-width="1"/><path d="M408 417H559.3" stroke="#5a5a5a" stroke-width="1"/><path d="M408 544.5H559.3" stroke="#8a8a8a" stroke-width="1"/><path d="M408 552.5H559.3" stroke="#a0a0a0" stroke-width="1"/><path d="M408 478.3H465" stroke="#555" stroke-width="1"/><path d="M543.6 478.3H559" stroke="#777" stroke-width="1"/><path d="M424.25 234.0V250.5L416.25 242.4H456.25" fill="none" stroke="#a8a8a8" stroke-width="0.8"/><text x="426.85" y="239.9" font-size="11.9" fill="#2a2a2a" transform="translate(426.85 0) scale(0.83 1) translate(-426.85 0)">10,32</text><path d="M424.25 329.0V345.5L416.25 337.4H456.25" fill="none" stroke="#a8a8a8" stroke-width="0.8"/><text x="426.85" y="334.9" font-size="11.9" fill="#2a2a2a" transform="translate(426.85 0) scale(0.83 1) translate(-426.85 0)">6,02</text><path d="M424 395.5V412L416 403.9H456" fill="none" stroke="#a8a8a8" stroke-width="0.8"/><text x="426.6" y="401.4" font-size="11.9" fill="#2a2a2a" transform="translate(426.6 0) scale(0.83 1) translate(-426.6 0)">3,03</text><path d="M423.75 462.2V478.7L415.75 470.59999999999997H455.75" fill="none" stroke="#a8a8a8" stroke-width="0.8"/><text x="426.35" y="468.09999999999997" font-size="11.9" fill="#2a2a2a" transform="translate(426.35 0) scale(0.83 1) translate(-426.35 0)">0,04</text><path d="M366.25 462.2V478.7L358.25 470.59999999999997H398.25" fill="none" stroke="#a8a8a8" stroke-width="0.8"/><text x="368.85" y="468.09999999999997" font-size="11.9" fill="#2a2a2a" transform="translate(368.85 0) scale(0.83 1) translate(-368.85 0)">0,00</text><path d="M424 528.0V544.5L416 536.4H456" fill="none" stroke="#a8a8a8" stroke-width="0.8"/><text x="426.6" y="533.9" font-size="11.9" fill="#2a2a2a" transform="translate(426.6 0) scale(0.83 1) translate(-426.6 0)">-2,95</text><text x="504.1" y="303" font-size="11.5" text-anchor="middle" fill="#222">2</text><text x="504.1" y="383.5" font-size="11.5" text-anchor="middle" fill="#222">1</text><text x="504.1" y="449.5" font-size="11.5" text-anchor="middle" fill="#222">0</text><text x="504.1" y="516" font-size="11.5" text-anchor="middle" fill="#222">-1</text></svg></body></html>
